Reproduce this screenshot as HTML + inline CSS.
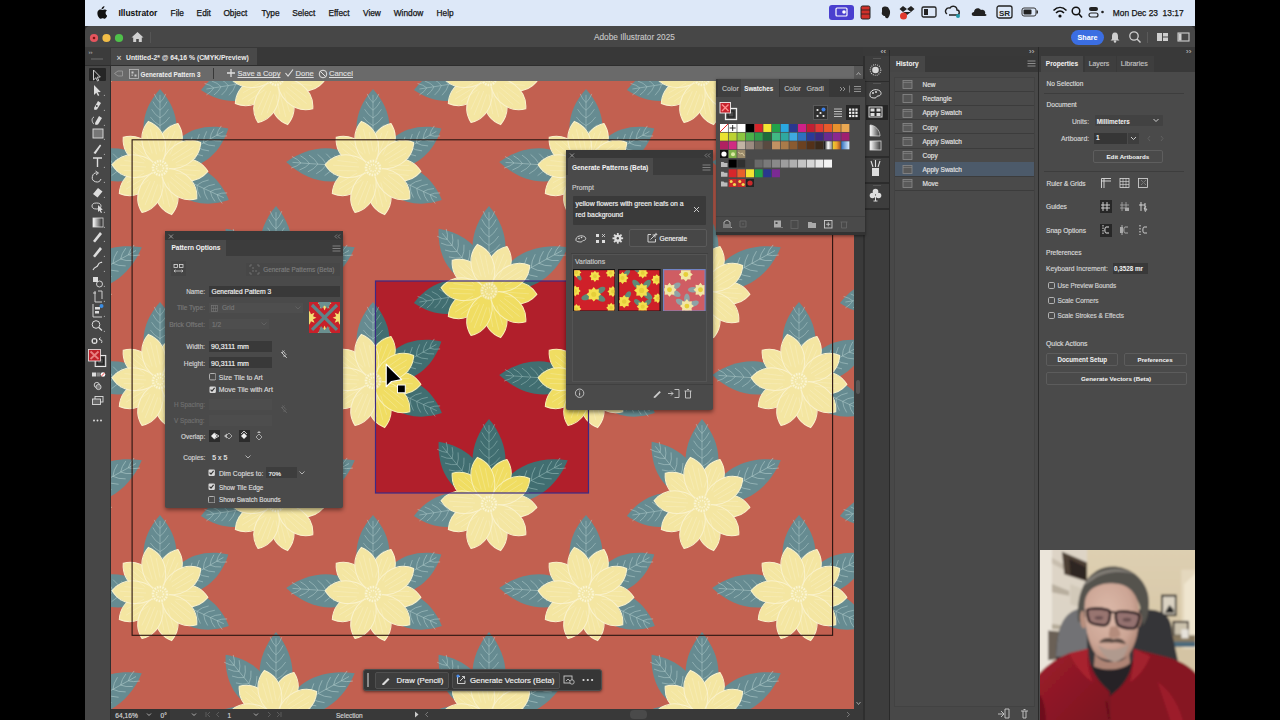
<!DOCTYPE html>
<html><head><meta charset="utf-8"><style>
html,body{margin:0;padding:0;width:1280px;height:720px;overflow:hidden;background:#000}
body{position:relative;font-family:"Liberation Sans",sans-serif}
.t{position:absolute;white-space:pre;line-height:12px;height:12px;-webkit-text-stroke-width:0.18px}
.r{position:absolute}
</style></head><body>
<div class="r" style="left:85px;top:0px;width:1110px;height:26px;background:#dde8f8;"></div><div class="t" style="left:118.4px;top:6.8px;font-size:8.46px;color:#111;font-weight:bold;-webkit-text-stroke-width:0.04px;">Illustrator</div><div class="t" style="left:170.6px;top:6.8px;font-size:8.3px;color:#151515;font-weight:normal;-webkit-text-stroke:0.25px #151515">File</div><div class="t" style="left:196.6px;top:6.8px;font-size:8.3px;color:#151515;font-weight:normal;-webkit-text-stroke:0.25px #151515">Edit</div><div class="t" style="left:223.4px;top:6.8px;font-size:8.3px;color:#151515;font-weight:normal;-webkit-text-stroke:0.25px #151515">Object</div><div class="t" style="left:261.6px;top:6.8px;font-size:8.3px;color:#151515;font-weight:normal;-webkit-text-stroke:0.25px #151515">Type</div><div class="t" style="left:292.2px;top:6.8px;font-size:8.3px;color:#151515;font-weight:normal;-webkit-text-stroke:0.25px #151515">Select</div><div class="t" style="left:328.4px;top:6.8px;font-size:8.3px;color:#151515;font-weight:normal;-webkit-text-stroke:0.25px #151515">Effect</div><div class="t" style="left:363px;top:6.8px;font-size:8.3px;color:#151515;font-weight:normal;-webkit-text-stroke:0.25px #151515">View</div><div class="t" style="left:393.75px;top:6.8px;font-size:8.3px;color:#151515;font-weight:normal;-webkit-text-stroke:0.25px #151515">Window</div><div class="t" style="left:436.6px;top:6.8px;font-size:8.3px;color:#151515;font-weight:normal;-webkit-text-stroke:0.25px #151515">Help</div><div class="t" style="left:1112.8px;top:6.8px;font-size:8.4px;color:#151515;font-weight:normal;-webkit-text-stroke:0.25px #151515">Mon Dec 23&nbsp;&nbsp;13:17</div><svg class="r" style="left:96px;top:6px;" width="11" height="13" viewBox="0 0 11 13"><path d="M7.6,2.2 C8.2,1.5 8.5,0.7 8.4,0 C7.6,0.1 6.8,0.6 6.3,1.2 C5.8,1.8 5.5,2.6 5.6,3.3 C6.4,3.3 7.1,2.9 7.6,2.2Z M9.6,6.9 C9.6,5.4 10.8,4.7 10.9,4.6 C10.2,3.6 9.1,3.5 8.8,3.5 C7.8,3.4 7,4 6.5,4 C6,4 5.3,3.5 4.5,3.5 C3.4,3.5 2.4,4.2 1.9,5.1 C0.8,7 1.6,9.8 2.7,11.3 C3.2,12 3.8,12.9 4.6,12.8 C5.4,12.8 5.7,12.3 6.6,12.3 C7.5,12.3 7.8,12.8 8.6,12.8 C9.4,12.8 9.9,12 10.4,11.3 C11,10.5 11.2,9.7 11.2,9.6 C11.2,9.6 9.6,9 9.6,6.9Z" fill="#111"/></svg><div class="r" style="left:829px;top:5.3px;width:25px;height:14.5px;background:#4a3fcf;border-radius:3px"></div><svg class="r" style="left:829px;top:5.3px;" width="25" height="14.5" viewBox="0 0 25 14.5"><rect x="7" y="3" width="11" height="8" rx="1" fill="none" stroke="#fff" stroke-width="1.2"/><circle cx="15" cy="7" r="1.8" fill="#fff"/></svg><svg class="r" style="left:860px;top:5px;" width="12" height="15" viewBox="0 0 12 15"><rect x="1" y="1" width="9" height="13" rx="1.5" fill="#d0302a" stroke="#222" stroke-width="1"/><path d="M1,5 H10 M1,9 H10" stroke="#222" stroke-width="0.8"/></svg><svg class="r" style="left:880px;top:5px;" width="12" height="15" viewBox="0 0 12 15"><path d="M2,3 C4,1 8,1 9,4 C11,6 10,11 8,13 C6,14 5,12 5,11 C3,11 1,9 2,7Z" fill="#222"/></svg><svg class="r" style="left:899px;top:4px;" width="16" height="16" viewBox="0 0 16 16"><path d="M4,2 L8,5 L4,8 L0.5,5Z M12,2 L15.5,5 L12,8 L8,5Z M4,8 L8,11 L12,8" fill="#222"/><circle cx="4.5" cy="12" r="3.5" fill="#e03a2e"/></svg><svg class="r" style="left:921px;top:5px;" width="16" height="14" viewBox="0 0 16 14"><rect x="1" y="2" width="14" height="10" rx="1.5" fill="none" stroke="#222" stroke-width="1.3"/><rect x="3" y="4" width="4" height="6" fill="#222"/></svg><svg class="r" style="left:944px;top:4px;" width="17" height="16" viewBox="0 0 17 16"><path d="M3,10 C0,8 2,3 6,4 C8,1 13,2 13,6 C16,6 16,11 13,11 L5,11" fill="none" stroke="#222" stroke-width="1.4"/><circle cx="14" cy="12" r="2" fill="#29a"/></svg><svg class="r" style="left:971px;top:5px;" width="16" height="14" viewBox="0 0 16 14"><path d="M3,11 C0,11 0,7 3,7 C3,3 8,2 10,5 C13,4 15,7 14,9 C16,9 16,11 14,11Z" fill="#222"/></svg><svg class="r" style="left:996px;top:4px;" width="17" height="16" viewBox="0 0 17 16"><rect x="1" y="2" width="15" height="12" rx="2" fill="none" stroke="#222" stroke-width="1.3"/><text x="8.5" y="11.5" font-size="8" font-family="Liberation Sans" font-weight="bold" text-anchor="middle" fill="#222">SR</text></svg><svg class="r" style="left:1021px;top:5px;" width="18" height="14" viewBox="0 0 18 14"><rect x="1" y="3" width="14" height="8" rx="2" fill="none" stroke="#333" stroke-width="1"/><rect x="2.5" y="4.5" width="8" height="5" rx="1" fill="#222"/><rect x="15.5" y="5.5" width="1.5" height="3" fill="#333"/></svg><svg class="r" style="left:1052px;top:5px;" width="16" height="14" viewBox="0 0 16 14"><path d="M1.5,5.5 C5.5,1.5 10.5,1.5 14.5,5.5" stroke="#111" stroke-width="1.6" fill="none"/><path d="M4,8 C6.5,5.5 9.5,5.5 12,8" stroke="#111" stroke-width="1.6" fill="none"/><circle cx="8" cy="11" r="1.6" fill="#111"/></svg><svg class="r" style="left:1071px;top:5px;" width="12" height="14" viewBox="0 0 12 14"><circle cx="5" cy="6" r="3.8" fill="none" stroke="#111" stroke-width="1.5"/><path d="M8,9 L11,12.5" stroke="#111" stroke-width="1.6"/></svg><svg class="r" style="left:1088px;top:5px;" width="18" height="14" viewBox="0 0 18 14"><rect x="1" y="2" width="9" height="4" rx="2" fill="#222"/><rect x="1" y="8" width="9" height="4" rx="2" fill="none" stroke="#222" stroke-width="1.2"/><circle cx="14.5" cy="7" r="1.3" fill="#222"/></svg><div class="r" style="left:85px;top:26px;width:1110px;height:694px;background:#2e2e2e;"></div><div class="r" style="left:85px;top:26px;width:1110px;height:21px;background:#474747;border-radius:5px 5px 0 0"></div><div class="r" style="left:85px;top:46.5px;width:1110px;height:1px;background:#333333;"></div><div class="t" style="left:594px;top:32.0px;font-size:8.28px;color:#c9c9c9;font-weight:normal;-webkit-text-stroke:0.1px #c9c9c9">Adobe Illustrator 2025</div><svg class="r" style="left:89px;top:33px;" width="36" height="10" viewBox="0 0 36 10"><circle cx="5" cy="5" r="4.1" fill="#e5555e"/><circle cx="5" cy="5" r="1.3" fill="#7a1414"/><circle cx="17.5" cy="5" r="4.1" fill="#f2bd47"/><circle cx="30" cy="5" r="4.1" fill="#4fc14a"/></svg><svg class="r" style="left:131px;top:31px;" width="13" height="12" viewBox="0 0 13 12"><path d="M6.5,1 L12.5,6.5 L10.8,6.5 L10.8,11 L7.8,11 L7.8,8 L5.2,8 L5.2,11 L2.2,11 L2.2,6.5 L0.5,6.5Z" fill="#d0d0d0"/></svg><div class="r" style="left:150px;top:32px;width:1px;height:11px;background:#555;"></div><div class="r" style="left:1071px;top:29.7px;width:32.5px;height:15px;background:#3b6ee2;border-radius:8px"></div><div class="t" style="left:1077.5px;top:32.0px;font-size:7.2px;color:#fff;font-weight:bold;-webkit-text-stroke-width:0.04px;">Share</div><svg class="r" style="left:1109px;top:31px;" width="12" height="12" viewBox="0 0 12 12"><path d="M6,1.5 C3.5,1.5 3,3.5 3,5.5 L3,8 L1.5,9.5 L10.5,9.5 L9,8 L9,5.5 C9,3.5 8.5,1.5 6,1.5Z" fill="#cfcfcf"/><circle cx="6" cy="10.5" r="1.2" fill="#cfcfcf"/></svg><svg class="r" style="left:1128px;top:30px;" width="14" height="14" viewBox="0 0 14 14"><circle cx="6" cy="6" r="4.2" fill="none" stroke="#cfcfcf" stroke-width="1.3"/><path d="M9,9 L12.5,12.5" stroke="#cfcfcf" stroke-width="1.4"/></svg><div class="r" style="left:1147px;top:32px;width:1px;height:11px;background:#5a5a5a;"></div><svg class="r" style="left:1156px;top:31px;" width="13" height="12" viewBox="0 0 13 12"><rect x="1" y="2" width="5" height="8" fill="#cfcfcf"/><rect x="7" y="2" width="5" height="3.5" fill="#cfcfcf"/><rect x="7" y="6.5" width="5" height="3.5" fill="#cfcfcf"/></svg><svg class="r" style="left:1177px;top:31px;" width="13" height="12" viewBox="0 0 13 12"><rect x="1" y="2" width="11" height="8" fill="none" stroke="#cfcfcf" stroke-width="1.1"/><rect x="1.5" y="2.5" width="3" height="7" fill="#cfcfcf"/></svg><div class="r" style="left:85px;top:47px;width:1110px;height:19px;background:#383838;"></div><div class="r" style="left:85px;top:47px;width:25px;height:19px;background:#3c3c3c;"></div><div class="r" style="left:85px;top:65px;width:1110px;height:1px;background:#2e2e2e;"></div><div class="t" style="left:88.5px;top:46.3px;font-size:6px;color:#9a9a9a;font-weight:normal;">&#8250;&#8250;</div><div class="r" style="left:90.5px;top:58px;width:12px;height:1.5px;background:#555;"></div><div class="r" style="left:111px;top:48px;width:146px;height:17px;background:#494949;"></div><div class="t" style="left:116.5px;top:51.6px;font-size:8.5px;color:#d0d0d0;font-weight:normal;">&#215;</div><div class="t" style="left:126px;top:51.6px;font-size:6.78px;color:#e8e8e8;font-weight:bold;-webkit-text-stroke-width:0.04px;">Untitled-2* @ 64,16 % (CMYK/Preview)</div><div class="r" style="left:85px;top:66px;width:25px;height:654px;background:#474747;"></div><div class="r" style="left:110px;top:66px;width:1px;height:654px;background:#2e2e2e;"></div><div class="r" style="left:89px;top:68px;width:17px;height:13px;background:#262626;border-radius:1px"></div><svg class="r" style="left:85px;top:0px;" width="25" height="430" viewBox="0 0 25 430"><defs><linearGradient id="gr1"><stop offset="0" stop-color="#fff"/><stop offset="1" stop-color="#222"/></linearGradient></defs>
<path d="M9,70 L9,80 L11.3,77.8 L13,81 L14.3,80.3 L12.6,77.2 L15.8,77Z" fill="none" stroke="#ddd" stroke-width="0.9" transform="translate(-0.5,0)"/>
<path d="M9,85 L9,95 L11.3,92.8 L13,96 L14.3,95.3 L12.6,92.2 L15.8,92Z" fill="#ddd"/>
<path d="M9,108 L13,101 L16,103 L12,109.5 L9.5,110Z" fill="#ddd"/><circle cx="11.8" cy="106" r="0.9" fill="#3f3f3f"/>
<path d="M10,123 L14,116 L17,118 L13,124.5 L10.5,125Z" fill="#ddd"/><path d="M9,117 C6,118 7,123 9,124" stroke="#ddd" fill="none" stroke-width="0.9"/>
<rect x="8" y="129" width="10" height="9" fill="#777" stroke="#ddd" stroke-width="0.9"/>
<path d="M8.5,153 L15,144.5 L16.2,145.5 L10.5,154Z" fill="#ddd"/>
<path d="M8,158 H17 M12.5,158 V167" stroke="#ddd" stroke-width="1.4"/>
<path d="M16,179 A4.5,4.5 0 1 1 12.5,173" stroke="#ddd" fill="none" stroke-width="1"/><path d="M10.5,171 L13.5,173 L11,175" stroke="#ddd" fill="none" stroke-width="0.9"/>
<path d="M8,194 L13,188 L17.5,191.5 L12.5,197.5Z" fill="#ddd"/>
<ellipse cx="11.5" cy="206" rx="4.5" ry="3" fill="none" stroke="#ddd" stroke-width="0.9"/><path d="M13,205 L13,212 L14.5,210.5 L16,213 L17,212.5 L15.8,210 L17.8,209.8Z" fill="#ddd"/>
<rect x="8" y="218" width="10" height="9" fill="url(#gr1)" stroke="#ddd" stroke-width="0.8"/>
<path d="M8,241 L15,232 L17,234 L10,242.5Z" fill="#ddd"/>
<path d="M8,256 L15,247 L17,249 L10,257.5Z" fill="#ddd"/>
<path d="M8,270 C10,266 12,268 13,265 C14,262 16,263 17,262" stroke="#ddd" stroke-width="1.1" fill="none"/>
<rect x="8" y="277" width="5" height="5" fill="#ddd"/><circle cx="14.5" cy="284" r="3" fill="none" stroke="#ddd" stroke-width="0.9"/>
<path d="M8,293 H11 M10,291 V302 H17 M13,291 H17 V299" stroke="#ddd" stroke-width="0.9" fill="none"/>
<path d="M8,304 V317 H17" stroke="#ddd" stroke-width="0.9" fill="none"/><rect x="10" y="307" width="5" height="2.5" fill="#ddd"/><rect x="10" y="311" width="4" height="2.5" fill="#ddd"/><circle cx="16.5" cy="306" r="2" fill="#3a8ee6"/>
<circle cx="11" cy="324.5" r="3.8" fill="none" stroke="#ddd" stroke-width="1"/><path d="M13.8,327.5 L17,330.5" stroke="#ddd" stroke-width="1.3"/>
<circle cx="9.5" cy="341" r="3" fill="#ddd"/><rect x="8" y="339.5" width="3" height="3" fill="#444"/><path d="M14,339 C16.5,339 17.5,341 16.5,343 M14,339 L15.5,337.5 M14,339 L15.5,340.5" stroke="#ddd" fill="none" stroke-width="0.9"/>
<rect x="10.2" y="355.5" width="10.5" height="11" fill="none" stroke="#e8e8e8" stroke-width="1.1"/><rect x="12.5" y="358" width="6" height="6" fill="none" stroke="#222" stroke-width="1.2"/>
<rect x="3.5" y="349.5" width="12" height="11.5" fill="#c02028" stroke="#eee" stroke-width="0.8"/><path d="M5.5,351.5 L13.5,359 M13.5,351.5 L5.5,359" stroke="#e88080" stroke-width="1.8"/>
<rect x="7" y="372.5" width="4" height="4" fill="#ddd"/><rect x="11.5" y="372.5" width="4" height="4" fill="#888"/><circle cx="18" cy="374.5" r="2.3" fill="#fff"/><path d="M16.4,376 L19.6,373" stroke="#e22" stroke-width="0.9"/>
<circle cx="11.8" cy="385" r="2.6" fill="none" stroke="#ddd" stroke-width="0.9"/><circle cx="13.5" cy="387" r="2.6" fill="#777" stroke="#ddd" stroke-width="0.8"/>
<rect x="10" y="396.5" width="8" height="5.5" fill="none" stroke="#ddd" stroke-width="0.9"/><rect x="7.5" y="399" width="8" height="5.5" fill="#666" stroke="#ddd" stroke-width="0.9"/>
<circle cx="9" cy="420.5" r="0.95" fill="#ddd"/><circle cx="12.5" cy="420.5" r="0.95" fill="#ddd"/><circle cx="16" cy="420.5" r="0.95" fill="#ddd"/>
<path d="M18.5,96 L20,94.5 L20,96Z" fill="#aaa"/><path d="M18.5,111 L20,109.5 L20,111Z" fill="#aaa"/><path d="M18.5,126 L20,124.5 L20,126Z" fill="#aaa"/><path d="M18.5,140 L20,138.5 L20,140Z" fill="#aaa"/><path d="M18.5,155 L20,153.5 L20,155Z" fill="#aaa"/><path d="M18.5,168 L20,166.5 L20,168Z" fill="#aaa"/><path d="M18.5,183 L20,181.5 L20,183Z" fill="#aaa"/><path d="M18.5,198 L20,196.5 L20,198Z" fill="#aaa"/><path d="M18.5,213 L20,211.5 L20,213Z" fill="#aaa"/><path d="M18.5,228 L20,226.5 L20,228Z" fill="#aaa"/><path d="M18.5,242 L20,240.5 L20,242Z" fill="#aaa"/><path d="M18.5,257 L20,255.5 L20,257Z" fill="#aaa"/><path d="M18.5,272 L20,270.5 L20,272Z" fill="#aaa"/><path d="M18.5,287 L20,285.5 L20,287Z" fill="#aaa"/><path d="M18.5,302 L20,300.5 L20,302Z" fill="#aaa"/><path d="M18.5,317 L20,315.5 L20,317Z" fill="#aaa"/><path d="M18.5,332 L20,330.5 L20,332Z" fill="#aaa"/></svg><div class="r" style="left:111px;top:66px;width:743px;height:15px;background:#6a6a6a;"></div><div class="r" style="left:854px;top:66px;width:10px;height:15px;background:#575757;"></div><svg class="r" style="left:854px;top:66px;" width="9" height="15" viewBox="0 0 9 15"><path d="M2.5,9 L4.5,6.5 L6.5,9" stroke="#aaa" fill="none" stroke-width="0.9"/></svg><svg class="r" style="left:113px;top:68px;" width="11" height="11" viewBox="0 0 11 11"><path d="M9.5,3 L5,3 L1.5,5.5 L5,8 L9.5,8Z" fill="none" stroke="#999" stroke-width="0.9"/></svg><svg class="r" style="left:129px;top:69px;" width="10" height="10" viewBox="0 0 10 10"><rect x="0.5" y="0.5" width="9" height="9" fill="none" stroke="#bbb" stroke-width="0.8"/><rect x="2.5" y="2.5" width="2" height="2" fill="#ccc"/><rect x="5.5" y="5.5" width="2" height="2" fill="#ccc"/><rect x="2.5" y="5.5" width="1.5" height="1.5" fill="#aaa"/></svg><div class="t" style="left:140.6px;top:68.6px;font-size:6.31px;color:#eeeeee;font-weight:bold;-webkit-text-stroke-width:0.04px;">Generated Pattern 3</div><div class="r" style="left:213px;top:68px;width:1px;height:11px;background:#383838;"></div><svg class="r" style="left:226px;top:68px;" width="10" height="10" viewBox="0 0 10 10"><path d="M5,1 V9 M1,5 H9" stroke="#e0e0e0" stroke-width="1.3"/></svg><div class="t" style="left:237.5px;top:68.4px;font-size:7.5px;color:#dedede;font-weight:normal;text-decoration:underline">Save a Copy</div><svg class="r" style="left:284px;top:68px;" width="10" height="10" viewBox="0 0 10 10"><path d="M1.5,5 L4,8 L9,1.5" stroke="#e0e0e0" stroke-width="1.1" fill="none"/></svg><div class="t" style="left:295.6px;top:68.4px;font-size:7.6px;color:#dedede;font-weight:normal;text-decoration:underline">Done</div><svg class="r" style="left:318px;top:68.5px;" width="10" height="10" viewBox="0 0 10 10"><circle cx="5" cy="5" r="3.8" fill="none" stroke="#e0e0e0" stroke-width="1"/><path d="M2.3,2.3 L7.7,7.7" stroke="#e0e0e0" stroke-width="1"/></svg><div class="t" style="left:329px;top:68.4px;font-size:7.7px;color:#dedede;font-weight:normal;text-decoration:underline">Cancel</div><svg style="position:absolute;left:111px;top:81px" width="743" height="628.5" viewBox="111 81 743 628.5">
<defs>
<g id="leaf">
  <path d="M0,-8 C23,-27 21,-58 0,-82 C-21,-58 -23,-27 0,-8Z" style="fill:var(--leaf)"/>
  <path d="M0,-6 L0,-76 M0,-12 Q4.3,-15 7.1,-21 M0,-12 Q-4.3,-15 -7.1,-21 M0,-20 Q5.0,-23 8.4,-29 M0,-20 Q-5.0,-23 -8.4,-29 M0,-28 Q5.8,-31 9.7,-37 M0,-28 Q-5.8,-31 -9.7,-37 M0,-36 Q6.6,-39 11.0,-45 M0,-36 Q-6.6,-39 -11.0,-45 M0,-44 Q5.8,-47 9.7,-53 M0,-44 Q-5.8,-47 -9.7,-53 M0,-52 Q5.0,-55 8.4,-61 M0,-52 Q-5.0,-55 -8.4,-61 M0,-60 Q4.3,-63 7.1,-69 M0,-60 Q-4.3,-63 -7.1,-69 M0,-68 Q3.5,-71 5.8,-77 M0,-68 Q-3.5,-71 -5.8,-77" style="stroke:var(--vein)" stroke-width="0.7" fill="none" opacity="0.8"/>
</g>
<path id="petal" d="M0,-4 C13,-9 17,-36 0,-48 C-17,-36 -13,-9 0,-4Z" style="fill:var(--petal);stroke:var(--pedge)" stroke-width="1"/>
<path id="pv" d="M0,-14 L0,-40 M-4,-16 L-5,-36 M4,-16 L5,-36" style="stroke:var(--pedge)" stroke-width="0.6" fill="none" opacity="0.6"/>
<g id="head">
  <circle r="21" style="fill:var(--petal2)"/>
  <use href="#petal" transform="rotate(22)"/><use href="#petal" transform="rotate(94)"/><use href="#petal" transform="rotate(166)"/><use href="#petal" transform="rotate(238)"/><use href="#petal" transform="rotate(310)"/><use href="#petal" transform="rotate(58)"/><use href="#petal" transform="rotate(130)"/><use href="#petal" transform="rotate(202)"/><use href="#petal" transform="rotate(274)"/><use href="#petal" transform="rotate(346)"/>
  <use href="#pv" transform="rotate(22)"/><use href="#pv" transform="rotate(58)"/><use href="#pv" transform="rotate(94)"/><use href="#pv" transform="rotate(130)"/><use href="#pv" transform="rotate(166)"/><use href="#pv" transform="rotate(202)"/><use href="#pv" transform="rotate(238)"/><use href="#pv" transform="rotate(274)"/><use href="#pv" transform="rotate(310)"/><use href="#pv" transform="rotate(346)"/>
  <circle r="9" style="fill:var(--ctr)"/>
  <circle r="7" fill="none" style="stroke:var(--dots)" stroke-width="2.4" stroke-dasharray="1.5 1.2"/>
  <circle r="3.5" fill="none" style="stroke:var(--dots)" stroke-width="1.6" stroke-dasharray="1.2 1.1"/>
</g><g id="fa"><use href="#leaf" transform="rotate(0) scale(1,0.963)"/><use href="#leaf" transform="rotate(-86) scale(1,1.061)"/><use href="#leaf" transform="rotate(60) scale(1,0.963)"/><use href="#leaf" transform="rotate(115) scale(1,0.927)"/><use href="#head"/></g><g id="fb"><use href="#leaf" transform="rotate(0) scale(1,1.037)"/><use href="#leaf" transform="rotate(-39) scale(1,0.976)"/><use href="#leaf" transform="rotate(61) scale(1,1.098)"/><use href="#leaf" transform="rotate(-99) scale(1,0.927)"/><use href="#head"/></g>
<clipPath id="tileclip"><rect x="375.5" y="281" width="213" height="212"/></clipPath></defs>
<rect x="111" y="81" width="743" height="628.5" fill="#c26050"/>
<g style="--leaf:#668b91;--vein:#aac6c6;--petal:#f4e6a2;--pedge:#faf2cc;--petal2:#f1e19a;--ctr:#f3e7a8;--dots:#fbf5d2"><use href="#fa" x="160" y="168"/><use href="#fa" x="373" y="168"/><use href="#fa" x="586" y="168"/><use href="#fa" x="799" y="168"/><use href="#fa" x="160" y="381"/><use href="#fa" x="373" y="381"/><use href="#fa" x="586" y="381"/><use href="#fa" x="799" y="381"/><use href="#fa" x="160" y="594"/><use href="#fa" x="373" y="594"/><use href="#fa" x="586" y="594"/><use href="#fa" x="799" y="594"/><use href="#fb" x="63" y="78"/><use href="#fb" x="276" y="78"/><use href="#fb" x="489" y="78"/><use href="#fb" x="702" y="78"/><use href="#fb" x="915" y="78"/><use href="#fb" x="63" y="291"/><use href="#fb" x="276" y="291"/><use href="#fb" x="489" y="291"/><use href="#fb" x="702" y="291"/><use href="#fb" x="915" y="291"/><use href="#fb" x="63" y="504"/><use href="#fb" x="276" y="504"/><use href="#fb" x="489" y="504"/><use href="#fb" x="702" y="504"/><use href="#fb" x="915" y="504"/><use href="#fb" x="63" y="717"/><use href="#fb" x="276" y="717"/><use href="#fb" x="489" y="717"/><use href="#fb" x="702" y="717"/><use href="#fb" x="915" y="717"/></g>
<g clip-path="url(#tileclip)" style="--leaf:#416e71;--vein:#8fb3b2;--petal:#f0dd62;--pedge:#f8f0b4;--petal2:#ecd85c;--ctr:#efe08a;--dots:#f8f0c0">
<rect x="375.5" y="281" width="213" height="212" fill="#b11f2b"/>
<use href="#fa" x="373" y="381"/><use href="#fa" x="586" y="381"/><use href="#fb" x="489" y="291"/><use href="#fb" x="489" y="504"/>
</g>
<rect x="375.5" y="281" width="213" height="212" fill="none" stroke="#3b2a86" stroke-width="1.2"/>
<rect x="132.1" y="139.8" width="700.5" height="495.5" fill="none" stroke="#2a1410" stroke-width="1.1"/>
</svg><div class="r" style="left:854px;top:81px;width:9px;height:628px;background:#3a3a3a;"></div><div class="r" style="left:856px;top:380px;width:4px;height:14px;background:#555;border-radius:2px"></div><svg class="r" style="left:854px;top:699px;" width="9" height="10" viewBox="0 0 9 10"><path d="M2.5,3 L4.5,5.5 L6.5,3" stroke="#aaa" fill="none" stroke-width="0.9"/></svg><div class="r" style="left:111px;top:709px;width:752px;height:11px;background:#393939;"></div><div class="r" style="left:111px;top:709px;width:59px;height:11px;background:#323232;"></div><div class="t" style="left:115.3px;top:710.1px;font-size:6.63px;color:#d0d0d0;font-weight:normal;">64,16%</div><div class="t" style="left:160.6px;top:710.1px;font-size:6.5px;color:#d0d0d0;font-weight:normal;">0°</div><div class="t" style="left:227.5px;top:710.1px;font-size:6.5px;color:#d0d0d0;font-weight:normal;">1</div><div class="t" style="left:336px;top:710.1px;font-size:6.51px;color:#d0d0d0;font-weight:normal;">Selection</div><svg class="r" style="left:145px;top:712px;" width="120" height="6" viewBox="0 0 120 6"><path d="M2,1.5 L4,3.5 L6,1.5" stroke="#bbb" fill="none" stroke-width="0.9" transform="translate(0,0)"/><path d="M47,1.5 L49,3.5 L51,1.5" stroke="#bbb" fill="none" stroke-width="0.9"/><path d="M109,1.5 L111,3.5 L113,1.5" stroke="#bbb" fill="none" stroke-width="0.9"/></svg><svg class="r" style="left:204px;top:711px;" width="80" height="7" viewBox="0 0 80 7"><path d="M2,1 V6 M6,1 L3.5,3.5 L6,6 M15,1 L12.5,3.5 L15,6" stroke="#666" fill="none" stroke-width="0.8"/><path d="M64,1 L66.5,3.5 L64,6 M73,1 L75.5,3.5 L73,6 M77,1 V6" stroke="#666" fill="none" stroke-width="0.8"/></svg><svg class="r" style="left:414px;top:711px;" width="16" height="7" viewBox="0 0 16 7"><path d="M1,0.5 L4.5,3.5 L1,6.5Z" fill="#ccc"/><path d="M14,1 L11.5,3.5 L14,6" stroke="#888" fill="none" stroke-width="0.8"/></svg><div class="r" style="left:630px;top:710px;width:17px;height:9px;background:#4a4a4a;border-radius:4px"></div><svg class="r" style="left:845px;top:711px;" width="8" height="7" viewBox="0 0 8 7"><path d="M2,1 L4.5,3.5 L2,6" stroke="#888" fill="none" stroke-width="0.8"/></svg><div class="r" style="left:863px;top:47px;width:27px;height:673px;background:#393939;"></div><div class="r" style="left:863px;top:56px;width:2px;height:664px;background:#2f2f2f;"></div><div class="r" style="left:889px;top:56px;width:2px;height:664px;background:#2f2f2f;"></div><div class="r" style="left:865px;top:56px;width:24px;height:664px;background:#3d3d3d;"></div><div class="t" style="left:880.5px;top:46.0px;font-size:8px;color:#bbb;font-weight:normal;">&#8249;&#8249;</div><svg class="r" style="left:863px;top:0px;" width="27" height="210" viewBox="0 0 27 210"><defs><linearGradient id="gr2"><stop offset="0" stop-color="#fff"/><stop offset="1" stop-color="#333"/></linearGradient></defs>
<circle cx="12.5" cy="70" r="3.3" fill="#d8d8d8"/><circle cx="12.5" cy="70" r="5.3" fill="none" stroke="#d0d0d0" stroke-width="1.1" stroke-dasharray="0.9 1.1"/>
<path d="M7,96 C6,90 13,88 17,91 C19,93 18,96 15,96 C13,96 14,98 12,98 C9,98 7.5,97.5 7,96Z" fill="none" stroke="#ddd" stroke-width="1"/><circle cx="10" cy="93" r="1" fill="#ddd"/><circle cx="13" cy="92" r="1" fill="#ddd"/>
<rect x="6" y="107" width="13" height="10" fill="none" stroke="#ddd" stroke-width="1"/><path d="M6,112 H19 M12.5,107 V117" stroke="#ddd" stroke-width="0.8"/>
<path d="M7,136 V125 C12,125 17,130 17,136Z" fill="url(#gr2)" stroke="#ddd" stroke-width="0.7"/>
<rect x="7" y="141" width="11" height="9" fill="url(#gr2)" stroke="#ddd" stroke-width="0.8"/>
<path d="M9,168 L9,176 L16,176 L16,168" fill="#ddd"/><path d="M10,167 L8,161 M12.5,167 V160 M15,167 L17,161" stroke="#ddd" stroke-width="1.1"/>
<circle cx="12.5" cy="191.5" r="2.8" fill="#ddd"/><circle cx="9.5" cy="195.5" r="2.8" fill="#ddd"/><circle cx="15.5" cy="195.5" r="2.8" fill="#ddd"/><path d="M12.5,196 V201 M10.5,201 H14.5" stroke="#ddd" stroke-width="1"/>
</svg><div class="r" style="left:866px;top:104.5px;width:22px;height:15px;background:#262626;"></div><svg class="r" style="left:863px;top:0px;" width="27" height="210" viewBox="0 0 27 210"><rect x="6" y="107" width="13" height="10" fill="none" stroke="#ddd" stroke-width="1"/><rect x="7.5" y="108.5" width="4" height="3" fill="#ddd"/><rect x="13.5" y="108.5" width="4" height="3" fill="#ddd"/><rect x="7.5" y="113" width="4" height="3" fill="#ddd"/><rect x="13.5" y="113" width="4" height="3" fill="#ddd"/></svg><div class="r" style="left:865px;top:80.5px;width:24px;height:1.5px;background:#2c2c2c;"></div><div class="r" style="left:865px;top:156px;width:24px;height:1.5px;background:#2c2c2c;"></div><div class="r" style="left:865px;top:182px;width:24px;height:1.5px;background:#2c2c2c;"></div><div class="r" style="left:865px;top:208px;width:24px;height:1.5px;background:#2c2c2c;"></div><div class="r" style="left:873px;top:58px;width:8px;height:1px;background:#555;"></div><div class="r" style="left:873px;top:83px;width:8px;height:1px;background:#555;"></div><div class="r" style="left:873px;top:158.5px;width:8px;height:1px;background:#555;"></div><div class="r" style="left:873px;top:184.5px;width:8px;height:1px;background:#555;"></div><div class="r" style="left:889px;top:50px;width:1px;height:670px;background:#2a2a2a;"></div><div class="r" style="left:890px;top:47px;width:148px;height:673px;background:#484848;"></div><div class="r" style="left:890px;top:47px;width:148px;height:9px;background:#393939;"></div><div class="t" style="left:1029px;top:46.0px;font-size:8px;color:#aaa;font-weight:normal;">&#8250;&#8250;</div><div class="r" style="left:890px;top:56px;width:148px;height:16px;background:#383838;"></div><div class="r" style="left:890px;top:56px;width:35px;height:16px;background:#464646;"></div><div class="t" style="left:896px;top:58.1px;font-size:6.6px;color:#f2f2f2;font-weight:bold;-webkit-text-stroke-width:0.04px;">History</div><svg class="r" style="left:1026px;top:59px;" width="11" height="9" viewBox="0 0 11 9"><path d="M1.5,2 H9.5 M1.5,4.5 H9.5 M1.5,7 H9.5" stroke="#999" stroke-width="0.9"/></svg><div class="r" style="left:894px;top:77px;width:141px;height:630px;background:#4a4a4a;border:1px solid #424242;box-sizing:border-box"></div><div class="r" style="left:895px;top:91.0px;width:139px;height:0.8px;background:#3c3c3c;"></div><svg class="r" style="left:902px;top:79.2px;" width="11" height="10" viewBox="0 0 11 10"><rect x="1" y="1.5" width="9" height="8" fill="#5a5a5a" stroke="#8a8a8a" stroke-width="0.8"/><path d="M1,3.5 H10" stroke="#8a8a8a" stroke-width="0.6"/></svg><div class="t" style="left:922.5px;top:79.0px;font-size:6.5px;color:#e0e0e0;font-weight:normal;">New</div><div class="r" style="left:895px;top:105.15px;width:139px;height:0.8px;background:#3c3c3c;"></div><svg class="r" style="left:902px;top:93.35000000000001px;" width="11" height="10" viewBox="0 0 11 10"><rect x="1" y="1.5" width="9" height="8" fill="#555" stroke="#8a8a8a" stroke-width="0.8"/></svg><div class="t" style="left:922.5px;top:93.2px;font-size:6.5px;color:#e0e0e0;font-weight:normal;">Rectangle</div><div class="r" style="left:895px;top:119.3px;width:139px;height:0.8px;background:#3c3c3c;"></div><svg class="r" style="left:902px;top:107.5px;" width="11" height="10" viewBox="0 0 11 10"><rect x="1" y="1.5" width="9" height="8" fill="#5a5a5a" stroke="#8a8a8a" stroke-width="0.8"/><path d="M1,3.5 H10" stroke="#8a8a8a" stroke-width="0.6"/></svg><div class="t" style="left:922.5px;top:107.3px;font-size:6.5px;color:#e0e0e0;font-weight:normal;">Apply Swatch</div><div class="r" style="left:895px;top:133.45000000000002px;width:139px;height:0.8px;background:#3c3c3c;"></div><svg class="r" style="left:902px;top:121.65px;" width="11" height="10" viewBox="0 0 11 10"><rect x="1" y="1.5" width="9" height="8" fill="#5a5a5a" stroke="#8a8a8a" stroke-width="0.8"/><path d="M1,3.5 H10" stroke="#8a8a8a" stroke-width="0.6"/></svg><div class="t" style="left:922.5px;top:121.5px;font-size:6.5px;color:#e0e0e0;font-weight:normal;">Copy</div><div class="r" style="left:895px;top:147.60000000000002px;width:139px;height:0.8px;background:#3c3c3c;"></div><svg class="r" style="left:902px;top:135.8px;" width="11" height="10" viewBox="0 0 11 10"><rect x="1" y="1.5" width="9" height="8" fill="#5a5a5a" stroke="#8a8a8a" stroke-width="0.8"/><path d="M1,3.5 H10" stroke="#8a8a8a" stroke-width="0.6"/></svg><div class="t" style="left:922.5px;top:135.6px;font-size:6.5px;color:#e0e0e0;font-weight:normal;">Apply Swatch</div><div class="r" style="left:895px;top:161.75px;width:139px;height:0.8px;background:#3c3c3c;"></div><svg class="r" style="left:902px;top:149.95px;" width="11" height="10" viewBox="0 0 11 10"><rect x="1" y="1.5" width="9" height="8" fill="#5a5a5a" stroke="#8a8a8a" stroke-width="0.8"/><path d="M1,3.5 H10" stroke="#8a8a8a" stroke-width="0.6"/></svg><div class="t" style="left:922.5px;top:149.8px;font-size:6.5px;color:#e0e0e0;font-weight:normal;">Copy</div><div class="r" style="left:895px;top:162.3px;width:139px;height:13.6px;background:#4c5a6a;"></div><div class="r" style="left:895px;top:175.90000000000003px;width:139px;height:0.8px;background:#3c3c3c;"></div><svg class="r" style="left:902px;top:164.10000000000002px;" width="11" height="10" viewBox="0 0 11 10"><rect x="1" y="1.5" width="9" height="8" fill="#5a5a5a" stroke="#8a8a8a" stroke-width="0.8"/><path d="M1,3.5 H10" stroke="#8a8a8a" stroke-width="0.6"/></svg><div class="t" style="left:922.5px;top:163.9px;font-size:6.5px;color:#e0e0e0;font-weight:normal;">Apply Swatch</div><div class="r" style="left:895px;top:190.05px;width:139px;height:0.8px;background:#3c3c3c;"></div><svg class="r" style="left:902px;top:178.25px;" width="11" height="10" viewBox="0 0 11 10"><rect x="1" y="1.5" width="9" height="8" fill="#5a5a5a" stroke="#8a8a8a" stroke-width="0.8"/><path d="M1,3.5 H10" stroke="#8a8a8a" stroke-width="0.6"/></svg><div class="t" style="left:922.5px;top:178.1px;font-size:6.5px;color:#e0e0e0;font-weight:normal;">Move</div><svg class="r" style="left:995px;top:707px;" width="35" height="12" viewBox="0 0 35 12"><path d="M3,7 H9 M6,4 L9,7 L6,10 M10,2 V11 H14 V2Z" stroke="#ccc" stroke-width="0.9" fill="none"/><path d="M26,4 H33 M28,4 V11 H31 V4 M28.5,2.5 H30.5" stroke="#ccc" stroke-width="0.9" fill="none"/></svg><div class="r" style="left:1038px;top:47px;width:1px;height:673px;background:#2a2a2a;"></div><div class="r" style="left:1039px;top:47px;width:156px;height:673px;background:#4a4a4a;"></div><div class="r" style="left:1039px;top:47px;width:156px;height:9px;background:#393939;"></div><div class="t" style="left:1186px;top:46.0px;font-size:8px;color:#aaa;font-weight:normal;">&#8250;&#8250;</div><div class="r" style="left:1039px;top:56px;width:156px;height:16px;background:#393939;"></div><div class="r" style="left:1041px;top:56px;width:42px;height:16px;background:#484848;"></div><div class="r" style="left:1084.5px;top:56px;width:31px;height:16px;background:#3e3e3e;"></div><div class="r" style="left:1116.5px;top:56px;width:37px;height:16px;background:#3e3e3e;"></div><div class="t" style="left:1045.8px;top:58.3px;font-size:6.53px;color:#f2f2f2;font-weight:bold;-webkit-text-stroke-width:0.04px;">Properties</div><div class="t" style="left:1088.7px;top:58.3px;font-size:6.86px;color:#c0c0c0;font-weight:normal;">Layers</div><div class="t" style="left:1120.8px;top:58.3px;font-size:7.0px;color:#c0c0c0;font-weight:normal;">Libraries</div><div class="t" style="left:1046.5px;top:77.5px;font-size:6.5px;color:#d8d8d8;font-weight:normal;">No Selection</div><div class="r" style="left:1044px;top:92.5px;width:140px;height:0.8px;background:#3d3d3d;"></div><div class="t" style="left:1046.5px;top:98.8px;font-size:6.63px;color:#d8d8d8;font-weight:normal;">Document</div><div class="t" style="left:1072px;top:115.6px;font-size:6.65px;color:#d0d0d0;font-weight:normal;">Units:</div><div class="r" style="left:1094.5px;top:115px;width:68px;height:11px;background:#424242;border-radius:1px"></div><div class="t" style="left:1096.7px;top:115.6px;font-size:6.34px;color:#f0f0f0;font-weight:bold;-webkit-text-stroke-width:0.04px;">Millimeters</div><svg class="r" style="left:1152px;top:117px;" width="8" height="7" viewBox="0 0 8 7"><path d="M1.5,2 L4,4.5 L6.5,2" stroke="#ddd" stroke-width="0.9" fill="none"/></svg><div class="t" style="left:1061px;top:133.3px;font-size:6.83px;color:#d0d0d0;font-weight:normal;">Artboard:</div><div class="r" style="left:1094px;top:133px;width:33px;height:11px;background:#363636;"></div><div class="r" style="left:1127.5px;top:133px;width:11px;height:11px;background:#3e3e3e;"></div><div class="t" style="left:1096px;top:132.3px;font-size:6.5px;color:#f0f0f0;font-weight:bold;-webkit-text-stroke-width:0.04px;">1</div><svg class="r" style="left:1128.5px;top:135px;" width="9" height="7" viewBox="0 0 9 7"><path d="M2,2 L4.5,4.5 L7,2" stroke="#ddd" stroke-width="0.9" fill="none"/></svg><svg class="r" style="left:1145px;top:134px;" width="20" height="9" viewBox="0 0 20 9"><path d="M5,2 L3,4.5 L5,7 M16,2 L18,4.5 L16,7" stroke="#666" stroke-width="0.8" fill="none"/></svg><div class="r" style="left:1092.7px;top:150px;width:70.8px;height:12.5px;background:#4a4a4a;border:1px solid #5e5e5e;box-sizing:border-box;border-radius:2px"></div><div class="t" style="left:1106.5px;top:151.1px;font-size:6.18px;color:#f0f0f0;font-weight:bold;-webkit-text-stroke-width:0.04px;">Edit Artboards</div><div class="r" style="left:1044px;top:170.5px;width:140px;height:0.8px;background:#3d3d3d;"></div><div class="t" style="left:1046.5px;top:178.1px;font-size:6.53px;color:#d8d8d8;font-weight:normal;">Ruler &amp; Grids</div><svg class="r" style="left:1100px;top:177px;" width="50" height="12" viewBox="0 0 50 12"><path d="M1.5,11 V1.5 H11 M1.5,4 H11 M4,1.5 V11" stroke="#ddd" stroke-width="0.9" fill="none"/><rect x="20" y="1.5" width="9" height="9" fill="none" stroke="#ddd" stroke-width="0.8"/><path d="M23,1.5 V10.5 M26,1.5 V10.5 M20,4.5 H29 M20,7.5 H29" stroke="#ddd" stroke-width="0.6"/><rect x="38.5" y="1.5" width="9" height="9" fill="none" stroke="#ddd" stroke-width="0.8"/><path d="M41,3 L46,8 M46,3 L41,8" stroke="#ddd" stroke-width="0.5" stroke-dasharray="1 1"/></svg><div class="t" style="left:1046px;top:201.4px;font-size:6.6px;color:#d8d8d8;font-weight:normal;">Guides</div><div class="r" style="left:1099.5px;top:200px;width:12.5px;height:13px;background:#272727;"></div><svg class="r" style="left:1099px;top:200px;" width="52" height="13" viewBox="0 0 52 13"><path d="M4,2 V11 M8,2 V11 M2,5 H11 M2,8 H11" stroke="#ddd" stroke-width="0.9"/><path d="M23,2 V11 M27,2 V11 M21,5 H30 M21,8 H30" stroke="#aaa" stroke-width="0.8"/><rect x="26" y="8" width="4" height="3" fill="#aaa"/><path d="M42,2 V11 M40,5 H46 M46,3 V11" stroke="#ddd" stroke-width="0.9"/><path d="M47,6 L45,9 L48,9 L46,12" stroke="#ddd" stroke-width="0.7" fill="none"/></svg><div class="r" style="left:1099.5px;top:223.5px;width:12.5px;height:13px;background:#272727;"></div><div class="t" style="left:1046px;top:224.8px;font-size:6.6px;color:#d8d8d8;font-weight:normal;">Snap Options</div><svg class="r" style="left:1099px;top:223px;" width="52" height="14" viewBox="0 0 52 14"><path d="M4,2 V12" stroke="#ddd" stroke-width="1" stroke-dasharray="1.5 1"/><path d="M10,4 H7 C5.5,4 5.5,10 7,10 H10" stroke="#ddd" stroke-width="1" fill="none"/><path d="M23,2 V12" stroke="#aaa" stroke-width="1"/><rect x="21" y="4" width="3" height="6" fill="#aaa"/><path d="M29,4 H26 C24.5,4 24.5,10 26,10 H29" stroke="#aaa" stroke-width="1" fill="none"/><path d="M41,2 V12" stroke="#ccc" stroke-width="1.2" stroke-dasharray="1.5 1.5"/><path d="M48,4 H45 C43.5,4 43.5,10 45,10 H48" stroke="#ccc" stroke-width="1" fill="none"/></svg><div class="t" style="left:1046px;top:246.8px;font-size:6.6px;color:#d8d8d8;font-weight:normal;">Preferences</div><div class="t" style="left:1046px;top:262.8px;font-size:6.67px;color:#d0d0d0;font-weight:normal;">Keyboard Increment:</div><div class="r" style="left:1112.5px;top:262.5px;width:35px;height:11px;background:#393939;"></div><div class="t" style="left:1114px;top:262.6px;font-size:6.3px;color:#f0f0f0;font-weight:bold;-webkit-text-stroke-width:0.04px;">0,3528 mr</div><svg class="r" style="left:1047.5px;top:282.1px;" width="7" height="7" viewBox="0 0 7 7"><rect x="0.5" y="0.5" width="6" height="6" rx="1.2" fill="none" stroke="#bdbdbd" stroke-width="0.9"/></svg><div class="t" style="left:1057.4px;top:280.4px;font-size:6.35px;color:#d0d0d0;font-weight:normal;">Use Preview Bounds</div><svg class="r" style="left:1047.5px;top:297.0px;" width="7" height="7" viewBox="0 0 7 7"><rect x="0.5" y="0.5" width="6" height="6" rx="1.2" fill="none" stroke="#bdbdbd" stroke-width="0.9"/></svg><div class="t" style="left:1057.4px;top:295.3px;font-size:6.5px;color:#d0d0d0;font-weight:normal;">Scale Corners</div><svg class="r" style="left:1047.5px;top:311.9px;" width="7" height="7" viewBox="0 0 7 7"><rect x="0.5" y="0.5" width="6" height="6" rx="1.2" fill="none" stroke="#bdbdbd" stroke-width="0.9"/></svg><div class="t" style="left:1057.4px;top:310.2px;font-size:6.4px;color:#d0d0d0;font-weight:normal;">Scale Strokes &amp; Effects</div><div class="t" style="left:1046px;top:337.8px;font-size:6.85px;color:#d8d8d8;font-weight:normal;">Quick Actions</div><div class="r" style="left:1046px;top:353px;width:72.4px;height:13.4px;background:#4a4a4a;border:1px solid #5c5c5c;box-sizing:border-box;border-radius:2px"></div><div class="t" style="left:1057.4px;top:354.4px;font-size:6.28px;color:#f0f0f0;font-weight:bold;-webkit-text-stroke-width:0.04px;">Document Setup</div><div class="r" style="left:1124px;top:353px;width:62.6px;height:13.4px;background:#4a4a4a;border:1px solid #5c5c5c;box-sizing:border-box;border-radius:2px"></div><div class="t" style="left:1137.6px;top:354.4px;font-size:6.11px;color:#f0f0f0;font-weight:bold;-webkit-text-stroke-width:0.04px;">Preferences</div><div class="r" style="left:1046px;top:372px;width:140.6px;height:13.4px;background:#4a4a4a;border:1px solid #5c5c5c;box-sizing:border-box;border-radius:2px"></div><div class="t" style="left:1081px;top:373.4px;font-size:6.2px;color:#f0f0f0;font-weight:bold;-webkit-text-stroke-width:0.04px;">Generate Vectors (Beta)</div><div class="r" style="left:716px;top:79px;width:149px;height:156px;background:#333333;box-shadow:0 1px 3px rgba(0,0,0,.5)"></div><div class="r" style="left:716px;top:79px;width:149px;height:153px;background:#4a4a4a;"></div><div class="r" style="left:716px;top:79px;width:149px;height:18px;background:#383838;"></div><div class="r" style="left:717.5px;top:79px;width:23px;height:18px;background:#3f3f3f;"></div><div class="r" style="left:740.9px;top:79px;width:37.8px;height:18.5px;background:#4a4a4a;"></div><div class="r" style="left:779.8px;top:79px;width:49px;height:18px;background:#3f3f3f;"></div><div class="t" style="left:722px;top:83.3px;font-size:7.0px;color:#bdbdbd;font-weight:normal;">Color</div><div class="t" style="left:744.2px;top:83.3px;font-size:6.29px;color:#f2f2f2;font-weight:bold;-webkit-text-stroke-width:0.04px;">Swatches</div><div class="t" style="left:784.2px;top:83.3px;font-size:7.0px;color:#bdbdbd;font-weight:normal;">Color</div><div class="t" style="left:806.4px;top:83.3px;font-size:7.2px;color:#bdbdbd;font-weight:normal;">Gradi</div><svg class="r" style="left:838px;top:84px;" width="25" height="10" viewBox="0 0 25 10"><path d="M2,3 L4,5 L2,7 M5,3 L7,5 L5,7" stroke="#aaa" stroke-width="0.8" fill="none"/><path d="M11.5,1.5 V8.5" stroke="#888" stroke-width="0.8"/><path d="M16,2.5 H23 M16,5 H23 M16,7.5 H23" stroke="#aaa" stroke-width="0.8"/></svg><svg class="r" style="left:719px;top:101px;" width="20" height="20" viewBox="0 0 20 20"><rect x="6.5" y="7.5" width="11" height="11" fill="none" stroke="#eee" stroke-width="1.3"/><rect x="9" y="10" width="6" height="6" fill="none" stroke="#222" stroke-width="1.2"/><rect x="1" y="1.5" width="10.5" height="10.5" fill="#c5222c" stroke="#eee" stroke-width="0.9"/><path d="M3,3.5 L9.5,10 M9.5,3.5 L3,10" stroke="#ff8f8f" stroke-width="1.4"/></svg><div class="r" style="left:813px;top:105px;width:14.5px;height:14.5px;background:#303030;border:1px solid #5a5a5a;box-sizing:border-box"></div><svg class="r" style="left:813px;top:105px;" width="15" height="15" viewBox="0 0 15 15"><circle cx="4.5" cy="5" r="1.1" fill="#eee"/><circle cx="7.5" cy="8" r="1.1" fill="#eee"/><circle cx="4.5" cy="11" r="1.1" fill="#eee"/><circle cx="10.5" cy="11" r="1.1" fill="#eee"/><circle cx="10.5" cy="4.5" r="2" fill="#3a7ee8"/></svg><svg class="r" style="left:832px;top:106px;" width="12" height="13" viewBox="0 0 12 13"><path d="M2,3 H10 M2,5.5 H10 M2,8 H10 M2,10.5 H10" stroke="#ccc" stroke-width="0.9"/></svg><div class="r" style="left:846.4px;top:105px;width:14px;height:14.5px;background:#262626;"></div><svg class="r" style="left:846.4px;top:105px;" width="14" height="15" viewBox="0 0 14 15"><rect x="3.0" y="3.5" width="2.2" height="2.2" fill="#f0f0f0"/><rect x="3.0" y="6.7" width="2.2" height="2.2" fill="#f0f0f0"/><rect x="3.0" y="9.9" width="2.2" height="2.2" fill="#f0f0f0"/><rect x="6.2" y="3.5" width="2.2" height="2.2" fill="#f0f0f0"/><rect x="6.2" y="6.7" width="2.2" height="2.2" fill="#f0f0f0"/><rect x="6.2" y="9.9" width="2.2" height="2.2" fill="#f0f0f0"/><rect x="9.4" y="3.5" width="2.2" height="2.2" fill="#f0f0f0"/><rect x="9.4" y="6.7" width="2.2" height="2.2" fill="#f0f0f0"/><rect x="9.4" y="9.9" width="2.2" height="2.2" fill="#f0f0f0"/></svg><svg class="r" style="left:719.8px;top:124.4px;" width="140" height="64" viewBox="0 0 140 64"><defs><linearGradient id="sg1"><stop offset="0" stop-color="#000"/><stop offset=".5" stop-color="#fff"/><stop offset="1" stop-color="#888"/></linearGradient><linearGradient id="sg2"><stop offset="0" stop-color="#e8d030"/><stop offset=".5" stop-color="#f0a030"/><stop offset="1" stop-color="#a05020"/></linearGradient><linearGradient id="sg3"><stop offset="0" stop-color="#3070c0"/><stop offset="1" stop-color="#e0f0ff"/></linearGradient></defs><rect x="0.00" y="0.00" width="7.97" height="7.97" fill="#fff"/><path d="M0.00,7.97 L7.97,0.00" stroke="#e22" stroke-width="1"/><rect x="8.67" y="0.00" width="7.97" height="7.97" fill="#fff"/><path d="M12.67,1.00 V7.00 M9.67,4.00 H15.67" stroke="#000" stroke-width="0.8"/><rect x="17.34" y="0.00" width="7.97" height="7.97" fill="#ffffff"/><rect x="26.01" y="0.00" width="7.97" height="7.97" fill="#000000"/><rect x="34.68" y="0.00" width="7.97" height="7.97" fill="#d7262b"/><rect x="43.35" y="0.00" width="7.97" height="7.97" fill="#f3e532"/><rect x="52.02" y="0.00" width="7.97" height="7.97" fill="#22a24a"/><rect x="60.69" y="0.00" width="7.97" height="7.97" fill="#2aa8e0"/><rect x="69.36" y="0.00" width="7.97" height="7.97" fill="#29378f"/><rect x="78.03" y="0.00" width="7.97" height="7.97" fill="#cf2088"/><rect x="86.70" y="0.00" width="7.97" height="7.97" fill="#bf1f33"/><rect x="95.37" y="0.00" width="7.97" height="7.97" fill="#e03b33"/><rect x="104.04" y="0.00" width="7.97" height="7.97" fill="#e85a2b"/><rect x="112.71" y="0.00" width="7.97" height="7.97" fill="#e8922d"/><rect x="121.38" y="0.00" width="7.97" height="7.97" fill="#eaa852"/><rect x="0.00" y="8.67" width="7.97" height="7.97" fill="#ebe232"/><rect x="8.67" y="8.67" width="7.97" height="7.97" fill="#bcd232"/><rect x="17.34" y="8.67" width="7.97" height="7.97" fill="#8dc63f"/><rect x="26.01" y="8.67" width="7.97" height="7.97" fill="#4bb04a"/><rect x="34.68" y="8.67" width="7.97" height="7.97" fill="#2f9e4a"/><rect x="43.35" y="8.67" width="7.97" height="7.97" fill="#1e6c3a"/><rect x="52.02" y="8.67" width="7.97" height="7.97" fill="#41b883"/><rect x="60.69" y="8.67" width="7.97" height="7.97" fill="#2fa8a0"/><rect x="69.36" y="8.67" width="7.97" height="7.97" fill="#3fa9e0"/><rect x="78.03" y="8.67" width="7.97" height="7.97" fill="#2e6fbf"/><rect x="86.70" y="8.67" width="7.97" height="7.97" fill="#2b3a97"/><rect x="95.37" y="8.67" width="7.97" height="7.97" fill="#3b2a7f"/><rect x="104.04" y="8.67" width="7.97" height="7.97" fill="#6a2b8f"/><rect x="112.71" y="8.67" width="7.97" height="7.97" fill="#8b288f"/><rect x="121.38" y="8.67" width="7.97" height="7.97" fill="#9e2071"/><rect x="0.00" y="17.34" width="7.97" height="7.97" fill="#b12161"/><rect x="8.67" y="17.34" width="7.97" height="7.97" fill="#d02a82"/><rect x="17.34" y="17.34" width="7.97" height="7.97" fill="#c2b3a3"/><rect x="26.01" y="17.34" width="7.97" height="7.97" fill="#9b8b80"/><rect x="34.68" y="17.34" width="7.97" height="7.97" fill="#6f6458"/><rect x="43.35" y="17.34" width="7.97" height="7.97" fill="#594a40"/><rect x="52.02" y="17.34" width="7.97" height="7.97" fill="#c29263"/><rect x="60.69" y="17.34" width="7.97" height="7.97" fill="#a97b4a"/><rect x="69.36" y="17.34" width="7.97" height="7.97" fill="#8a5b31"/><rect x="78.03" y="17.34" width="7.97" height="7.97" fill="#6b4121"/><rect x="86.70" y="17.34" width="7.97" height="7.97" fill="#533119"/><rect x="95.37" y="17.34" width="7.97" height="7.97" fill="#3b2a1b"/><rect x="104.04" y="17.34" width="7.97" height="7.97" fill="url(#sg1)"/><rect x="112.71" y="17.34" width="7.97" height="7.97" fill="url(#sg2)"/><rect x="121.38" y="17.34" width="7.97" height="7.97" fill="url(#sg3)"/><rect x="0" y="26.01" width="7.97" height="7.97" fill="#111"/><circle cx="3.98" cy="29.99" r="2.6" fill="#fff"/><rect x="8.67" y="26.01" width="7.97" height="7.97" fill="#7fb04a"/><circle cx="13.00" cy="30.34" r="2" fill="#d9e8a0"/><rect x="17.34" y="26.01" width="7.97" height="7.97" fill="#9a8a6a"/><path d="M18.34,28.01 l2,2 l2,-1 l2,3" stroke="#d8c8a0" stroke-width="1" fill="none"/><path d="M1,38.10 H3.5 L4.5,39.10 H7.5 V43.10 H1Z" fill="#bbb"/><path d="M1,47.80 H3.5 L4.5,48.80 H7.5 V52.80 H1Z" fill="#bbb"/><path d="M1,57.50 H3.5 L4.5,58.50 H7.5 V62.50 H1Z" fill="#bbb"/><rect x="8.67" y="35.60" width="7.97" height="7.97" fill="#000000"/><rect x="17.34" y="35.60" width="7.97" height="7.97" fill="#303030"/><rect x="26.01" y="35.60" width="7.97" height="7.97" fill="#484848"/><rect x="34.68" y="35.60" width="7.97" height="7.97" fill="#6a6a6a"/><rect x="43.35" y="35.60" width="7.97" height="7.97" fill="#7a7a7a"/><rect x="52.02" y="35.60" width="7.97" height="7.97" fill="#8a8a8a"/><rect x="60.69" y="35.60" width="7.97" height="7.97" fill="#9d9d9d"/><rect x="69.36" y="35.60" width="7.97" height="7.97" fill="#b0b0b0"/><rect x="78.03" y="35.60" width="7.97" height="7.97" fill="#c4c4c4"/><rect x="86.70" y="35.60" width="7.97" height="7.97" fill="#d6d6d6"/><rect x="95.37" y="35.60" width="7.97" height="7.97" fill="#e8e8e8"/><rect x="104.04" y="35.60" width="7.97" height="7.97" fill="#f4f4f4"/><rect x="8.67" y="45.30" width="7.97" height="7.97" fill="#d7262b"/><rect x="17.34" y="45.30" width="7.97" height="7.97" fill="#e8602b"/><rect x="26.01" y="45.30" width="7.97" height="7.97" fill="#f3e532"/><rect x="34.68" y="45.30" width="7.97" height="7.97" fill="#22a24a"/><rect x="43.35" y="45.30" width="7.97" height="7.97" fill="#29378f"/><rect x="52.02" y="45.30" width="7.97" height="7.97" fill="#7b2a93"/><rect x="8.67" y="55.00" width="7.97" height="7.97" fill="#c8282a"/><circle cx="11.17" cy="57.50" r="1.5" fill="#f0d850"/><circle cx="14.47" cy="60.50" r="1.6" fill="#f0d850"/><rect x="17.34" y="55.00" width="7.97" height="7.97" fill="#c8282a"/><circle cx="19.84" cy="57.50" r="1.5" fill="#f0d850"/><circle cx="23.14" cy="60.50" r="1.6" fill="#f0d850"/><rect x="26.01" y="55.00" width="7.97" height="7.97" fill="#222"/><circle cx="30.01" cy="59.00" r="2.6" fill="#c8282a"/></svg><div class="r" style="left:716px;top:216px;width:149px;height:0.8px;background:#404040;"></div><svg class="r" style="left:716px;top:218px;" width="149" height="12" viewBox="0 0 149 12"><path d="M8,10 V4 L11,2 L14,4 V10 M10,10 V6 M12,10 V6" stroke="#bbb" stroke-width="0.9" fill="none"/><circle cx="15.5" cy="9.5" r="0.6" fill="#bbb"/><path d="M24,3 H30 V9 H24Z M26,6 H28" stroke="#666" stroke-width="0.9" fill="none"/><rect x="58" y="2.5" width="7" height="7" fill="#aaa"/><rect x="59.5" y="4" width="2" height="2" fill="#4a4a4a"/><circle cx="66" cy="9.5" r="0.6" fill="#bbb"/><rect x="75" y="2.5" width="7" height="8" fill="none" stroke="#666" stroke-width="0.8"/><path d="M92,4 H95.5 L96.5,5 H100 V10 H92Z" fill="#aaa"/><rect x="108.5" y="2.5" width="7.5" height="7.5" fill="none" stroke="#ccc" stroke-width="0.9"/><path d="M112.25,4.2 V8.3 M110.2,6.25 H114.3" stroke="#ccc" stroke-width="0.9"/><path d="M124.5,4 H131.5 M125.5,4 V10 H130.5 V4" stroke="#666" stroke-width="0.9" fill="none"/></svg><div class="r" style="left:165.3px;top:231px;width:178px;height:276.7px;background:#4a4a4a;box-shadow:0 2px 4px rgba(0,0,0,.45);border-radius:2px"></div><div class="r" style="left:165.3px;top:231px;width:178px;height:8.6px;background:#383838;"></div><div class="r" style="left:165.3px;top:239.6px;width:178px;height:16.5px;background:#3c3c3c;"></div><div class="r" style="left:165.3px;top:239.6px;width:60.7px;height:16.8px;background:#4a4a4a;"></div><svg class="r" style="left:167px;top:232.5px;" width="8" height="7" viewBox="0 0 8 7"><path d="M2,1.5 L6,5.5 M6,1.5 L2,5.5" stroke="#aaa" stroke-width="0.8"/></svg><svg class="r" style="left:333px;top:232.5px;" width="8" height="7" viewBox="0 0 8 7"><path d="M4,1.5 L2,3.5 L4,5.5 M7,1.5 L5,3.5 L7,5.5" stroke="#999" stroke-width="0.7" fill="none"/></svg><div class="t" style="left:171.4px;top:242.4px;font-size:6.55px;color:#f2f2f2;font-weight:bold;-webkit-text-stroke-width:0.04px;">Pattern Options</div><svg class="r" style="left:331px;top:244px;" width="11" height="9" viewBox="0 0 11 9"><path d="M1.5,2 H9.5 M1.5,4.5 H9.5 M1.5,7 H9.5" stroke="#888" stroke-width="0.9"/></svg><div class="r" style="left:171px;top:261.4px;width:14.5px;height:14.6px;background:#454545;"></div><svg class="r" style="left:171px;top:261.4px;" width="15" height="15" viewBox="0 0 15 15"><rect x="3" y="3.5" width="3.5" height="3" fill="none" stroke="#ddd" stroke-width="0.8"/><rect x="8.5" y="3.5" width="3.5" height="3" fill="none" stroke="#ddd" stroke-width="0.8"/><path d="M3,10 H12 M3,10 L4.5,8.8 M3,10 L4.5,11.2 M12,10 L10.5,8.8 M12,10 L10.5,11.2" stroke="#ddd" stroke-width="0.7" fill="none"/></svg><div class="r" style="left:246px;top:262.7px;width:93.8px;height:13.3px;background:#474747;"></div><svg class="r" style="left:249px;top:264px;" width="11" height="11" viewBox="0 0 11 11"><path d="M1,3 V1 H3 M8,1 H10 V3 M10,8 V10 H8 M3,10 H1 V8" stroke="#777" stroke-width="0.8" fill="none"/><circle cx="4" cy="4" r="0.8" fill="#777"/><circle cx="7" cy="7" r="0.8" fill="#777"/><circle cx="4" cy="7" r="0.8" fill="#777"/></svg><div class="t" style="left:263.3px;top:264.3px;font-size:6.37px;color:#7c7c7c;font-weight:normal;">Generate Patterns (Beta)</div><div class="t" style="left:186.2px;top:285.8px;font-size:6.4px;color:#d0d0d0;font-weight:normal;">Name:</div><div class="r" style="left:208.6px;top:285.7px;width:131.2px;height:11px;background:#393939;"></div><div class="t" style="left:211.5px;top:285.8px;font-size:6.6px;color:#f0f0f0;font-weight:normal;">Generated Pattern 3</div><div class="t" style="left:177px;top:302.4px;font-size:6.54px;color:#777;font-weight:normal;">Tile Type:</div><div class="r" style="left:208.6px;top:302.7px;width:94.7px;height:10.5px;background:#4e4e4e;"></div><svg class="r" style="left:210.5px;top:304.5px;" width="8" height="7" viewBox="0 0 8 7"><rect x="0.5" y="0.5" width="6" height="6" fill="none" stroke="#777" stroke-width="0.7"/><path d="M2.5,0.5 V6.5 M4.5,0.5 V6.5 M0.5,3.5 H6.5" stroke="#777" stroke-width="0.6"/></svg><div class="t" style="left:222px;top:302.4px;font-size:6.5px;color:#777;font-weight:normal;">Grid</div><svg class="r" style="left:294px;top:305px;" width="8" height="6" viewBox="0 0 8 6"><path d="M1.5,1.5 L4,4 L6.5,1.5" stroke="#666" stroke-width="0.8" fill="none"/></svg><div class="t" style="left:169.2px;top:318.7px;font-size:6.6px;color:#777;font-weight:normal;">Brick Offset:</div><div class="r" style="left:208.6px;top:318.7px;width:60px;height:10.5px;background:#4e4e4e;"></div><div class="t" style="left:212px;top:318.7px;font-size:6.5px;color:#777;font-weight:normal;">1/2</div><svg class="r" style="left:260px;top:321px;" width="8" height="6" viewBox="0 0 8 6"><path d="M1.5,1.5 L4,4 L6.5,1.5" stroke="#666" stroke-width="0.8" fill="none"/></svg><svg class="r" style="left:308.7px;top:301.5px;" width="31.2" height="31.6" viewBox="0 0 31.2 31.6"><rect width="31.2" height="31.6" fill="#c8202a"/><path d="M3,3 L28,28 M28,3 L3,28" stroke="#5f8388" stroke-width="3.2"/><polygon points="15.60,-5.50 17.07,-2.06 20.55,-3.45 19.16,0.03 22.60,1.50 19.16,2.97 20.55,6.45 17.07,5.06 15.60,8.50 14.13,5.06 10.65,6.45 12.04,2.97 8.60,1.50 12.04,0.03 10.65,-3.45 14.13,-2.06" fill="#f3df72"/><polygon points="15.60,23.50 17.07,26.94 20.55,25.55 19.16,29.03 22.60,30.50 19.16,31.97 20.55,35.45 17.07,34.06 15.60,37.50 14.13,34.06 10.65,35.45 12.04,31.97 8.60,30.50 12.04,29.03 10.65,25.55 14.13,26.94" fill="#f3df72"/><polygon points="0.50,8.80 1.97,12.24 5.45,10.85 4.06,14.33 7.50,15.80 4.06,17.27 5.45,20.75 1.97,19.36 0.50,22.80 -0.97,19.36 -4.45,20.75 -3.06,17.27 -6.50,15.80 -3.06,14.33 -4.45,10.85 -0.97,12.24" fill="#f3df72"/><polygon points="30.70,8.80 32.17,12.24 35.65,10.85 34.26,14.33 37.70,15.80 34.26,17.27 35.65,20.75 32.17,19.36 30.70,22.80 29.23,19.36 25.75,20.75 27.14,17.27 23.70,15.80 27.14,14.33 25.75,10.85 29.23,12.24" fill="#f3df72"/><path d="M9,31.6 L12,24 L15.6,28 L19,24 L22,31.6Z" fill="#6a9090"/><path d="M9,0 L12,7 L15.6,3.5 L19,7 L22,0Z" fill="#6a9090"/></svg><div class="t" style="left:186.2px;top:341.3px;font-size:6.63px;color:#d0d0d0;font-weight:normal;">Width:</div><div class="r" style="left:208.6px;top:341.1px;width:63.2px;height:10.8px;background:#393939;"></div><div class="t" style="left:211px;top:341.3px;font-size:7.0px;color:#f0f0f0;font-weight:normal;">90,3111 mm</div><div class="t" style="left:183.8px;top:357.8px;font-size:6.69px;color:#d0d0d0;font-weight:normal;">Height:</div><div class="r" style="left:208.6px;top:357.4px;width:63.2px;height:10.9px;background:#393939;"></div><div class="t" style="left:211px;top:357.6px;font-size:7.0px;color:#f0f0f0;font-weight:normal;">90,3111 mm</div><svg class="r" style="left:279px;top:349px;" width="10" height="12" viewBox="0 0 10 12"><path d="M3,1.5 L6,4 M4.5,5.5 L3,4 L5.5,1.5 M7,8 L4,5.5 M5.5,4 L7,5.5 L4.5,8 M2,3 L8,9" stroke="#ccc" stroke-width="0.8" fill="none"/></svg><svg class="r" style="left:208.5px;top:373.3px;" width="7.4" height="7.4" viewBox="0 0 7.4 7.4"><rect x="0.5" y="0.5" width="6.4" height="6.4" rx="1.2" fill="none" stroke="#bdbdbd" stroke-width="0.9"/></svg><div class="t" style="left:218.8px;top:371.6px;font-size:6.88px;color:#d8d8d8;font-weight:normal;">Size Tile to Art</div><svg class="r" style="left:208.5px;top:385.5px;" width="7.4" height="7.4" viewBox="0 0 7.4 7.4"><rect x="0.5" y="0.5" width="6.4" height="6.4" rx="1.2" fill="#d8d8d8"/><path d="M1.6,3.6 L3,5.2 L5.6,1.8" stroke="#333" stroke-width="1.1" fill="none"/></svg><div class="t" style="left:218.8px;top:383.8px;font-size:6.9px;color:#d8d8d8;font-weight:normal;">Move Tile with Art</div><div class="t" style="left:174px;top:398.8px;font-size:6.34px;color:#6f6f6f;font-weight:normal;">H Spacing:</div><div class="r" style="left:208.6px;top:398.5px;width:63px;height:11px;background:#4d4d4d;"></div><div class="t" style="left:174px;top:414.8px;font-size:6.34px;color:#6f6f6f;font-weight:normal;">V Spacing:</div><div class="r" style="left:208.6px;top:414.5px;width:63px;height:11px;background:#4d4d4d;"></div><svg class="r" style="left:279px;top:404px;" width="10" height="12" viewBox="0 0 10 12"><path d="M3,1.5 L6,4 M4.5,5.5 L3,4 L5.5,1.5 M7,8 L4,5.5 M5.5,4 L7,5.5 L4.5,8 M2,3 L8,9" stroke="#666" stroke-width="0.8" fill="none"/></svg><div class="t" style="left:181px;top:430.8px;font-size:6.4px;color:#d0d0d0;font-weight:normal;">Overlap:</div><div class="r" style="left:208.5px;top:430px;width:11.5px;height:12px;background:#2c2c2c;"></div><div class="r" style="left:238.5px;top:430px;width:11.5px;height:12px;background:#2c2c2c;"></div><svg class="r" style="left:208px;top:429px;" width="60" height="14" viewBox="0 0 60 14"><path d="M3,7 L6,4 L9,7 L6,10Z" fill="#eee"/><path d="M6,4 L11,7 L6,10" stroke="#eee" stroke-width="0.8" fill="none"/><path d="M18,7 L21,4 L24,7 L21,10Z" fill="none" stroke="#bbb" stroke-width="0.8"/><path d="M16,7 L19,4.5 V9.5Z" fill="#bbb"/><path d="M36,4 L39,7 L36,10 L33,7Z" fill="#eee"/><path d="M33,5 L36,2 L39,5" stroke="#eee" stroke-width="0.8" fill="none"/><path d="M51,5 L54,8 L51,11 L48,8Z" fill="none" stroke="#bbb" stroke-width="0.8"/><path d="M49,4 L51,2 L53,4" fill="#bbb"/></svg><div class="t" style="left:183.3px;top:452.1px;font-size:6.5px;color:#d0d0d0;font-weight:normal;">Copies:</div><div class="r" style="left:208.3px;top:451.5px;width:45px;height:11.5px;background:#4a4a4a;"></div><div class="t" style="left:212.3px;top:452.1px;font-size:6.9px;color:#e8e8e8;font-weight:normal;">5 x 5</div><svg class="r" style="left:244px;top:454px;" width="8" height="6" viewBox="0 0 8 6"><path d="M1.5,1.5 L4,4 L6.5,1.5" stroke="#ccc" stroke-width="0.8" fill="none"/></svg><svg class="r" style="left:208px;top:469px;" width="7.4" height="7.4" viewBox="0 0 7.4 7.4"><rect x="0.5" y="0.5" width="6.4" height="6.4" rx="1.2" fill="#d8d8d8"/><path d="M1.6,3.6 L3,5.2 L5.6,1.8" stroke="#333" stroke-width="1.1" fill="none"/></svg><div class="t" style="left:219px;top:467.5px;font-size:6.76px;color:#d8d8d8;font-weight:normal;">Dim Copies to:</div><div class="r" style="left:265.7px;top:467.3px;width:31px;height:10.8px;background:#3d3d3d;"></div><div class="t" style="left:268.5px;top:467.5px;font-size:6.2px;color:#e8e8e8;font-weight:normal;">70%</div><svg class="r" style="left:298px;top:470px;" width="8" height="6" viewBox="0 0 8 6"><path d="M1.5,1.5 L4,4 L6.5,1.5" stroke="#ccc" stroke-width="0.8" fill="none"/></svg><svg class="r" style="left:208px;top:483.3px;" width="7.4" height="7.4" viewBox="0 0 7.4 7.4"><rect x="0.5" y="0.5" width="6.4" height="6.4" rx="1.2" fill="#d8d8d8"/><path d="M1.6,3.6 L3,5.2 L5.6,1.8" stroke="#333" stroke-width="1.1" fill="none"/></svg><div class="t" style="left:219px;top:481.8px;font-size:6.4px;color:#d8d8d8;font-weight:normal;">Show Tile Edge</div><svg class="r" style="left:208px;top:495.6px;" width="7.4" height="7.4" viewBox="0 0 7.4 7.4"><rect x="0.5" y="0.5" width="6.4" height="6.4" rx="1.2" fill="none" stroke="#bdbdbd" stroke-width="0.9"/></svg><div class="t" style="left:219px;top:494.1px;font-size:6.35px;color:#d8d8d8;font-weight:normal;">Show Swatch Bounds</div><div class="r" style="left:566px;top:150.4px;width:147px;height:260px;background:#4a4a4a;box-shadow:0 2px 4px rgba(0,0,0,.5);border-radius:2px"></div><div class="r" style="left:566px;top:150.4px;width:147px;height:8px;background:#383838;"></div><div class="r" style="left:566px;top:158.4px;width:147px;height:16.8px;background:#3c3c3c;"></div><div class="r" style="left:567.5px;top:158.4px;width:85.6px;height:17px;background:#4a4a4a;"></div><svg class="r" style="left:568px;top:151.5px;" width="8" height="7" viewBox="0 0 8 7"><path d="M2,1.5 L6,5.5 M6,1.5 L2,5.5" stroke="#aaa" stroke-width="0.8"/></svg><svg class="r" style="left:703px;top:151.5px;" width="8" height="7" viewBox="0 0 8 7"><path d="M4,1.5 L2,3.5 L4,5.5 M7,1.5 L5,3.5 L7,5.5" stroke="#999" stroke-width="0.7" fill="none"/></svg><div class="t" style="left:571.9px;top:161.6px;font-size:6.52px;color:#f2f2f2;font-weight:bold;-webkit-text-stroke-width:0.04px;">Generate Patterns (Beta)</div><svg class="r" style="left:700.5px;top:162.5px;" width="11" height="9" viewBox="0 0 11 9"><path d="M1.5,2 H9.5 M1.5,4.5 H9.5 M1.5,7 H9.5" stroke="#888" stroke-width="0.9"/></svg><div class="t" style="left:571.9px;top:182.3px;font-size:6.8px;color:#c8c8c8;font-weight:normal;">Prompt</div><div class="r" style="left:573.4px;top:195.6px;width:132.7px;height:29.1px;background:#3a3a3a;border-radius:1px"></div><div class="t" style="left:575.5px;top:198.0px;font-size:6.89px;color:#f0f0f0;font-weight:normal;">yellow flowers with green leafs on a</div><div class="t" style="left:575.5px;top:209.2px;font-size:6.85px;color:#f0f0f0;font-weight:normal;">red background</div><svg class="r" style="left:692px;top:205px;" width="9" height="9" viewBox="0 0 9 9"><path d="M2,2 L7,7 M7,2 L2,7" stroke="#ddd" stroke-width="0.9"/></svg><svg class="r" style="left:573px;top:231px;" width="52" height="15" viewBox="0 0 52 15"><path d="M3,9.5 C2,5 9,3.5 12,6 C13.5,7.5 12.5,9.5 10.5,9.5 C9,9.5 9.5,11 8,11 C5.5,11 3.5,10.5 3,9.5Z" fill="none" stroke="#ddd" stroke-width="0.9"/><circle cx="6" cy="7.5" r="0.8" fill="#ddd"/><circle cx="8.5" cy="6.5" r="0.8" fill="#ddd"/><rect x="23" y="3" width="3" height="3" fill="#ddd"/><rect x="23" y="9" width="3" height="3" fill="#ddd"/><rect x="29" y="9" width="3" height="3" fill="#ddd"/><path d="M29,3 L32,6 M32,3 L29,6" stroke="#ddd" stroke-width="0.8"/><circle cx="44.8" cy="7.3" r="3.6" fill="#ddd"/><rect x="43.9" y="2" width="1.8" height="2.4" fill="#ddd" transform="rotate(0 44.8 7.3)"/><rect x="43.9" y="2" width="1.8" height="2.4" fill="#ddd" transform="rotate(45 44.8 7.3)"/><rect x="43.9" y="2" width="1.8" height="2.4" fill="#ddd" transform="rotate(90 44.8 7.3)"/><rect x="43.9" y="2" width="1.8" height="2.4" fill="#ddd" transform="rotate(135 44.8 7.3)"/><rect x="43.9" y="2" width="1.8" height="2.4" fill="#ddd" transform="rotate(180 44.8 7.3)"/><rect x="43.9" y="2" width="1.8" height="2.4" fill="#ddd" transform="rotate(225 44.8 7.3)"/><rect x="43.9" y="2" width="1.8" height="2.4" fill="#ddd" transform="rotate(270 44.8 7.3)"/><rect x="43.9" y="2" width="1.8" height="2.4" fill="#ddd" transform="rotate(315 44.8 7.3)"/><circle cx="44.8" cy="7.3" r="1.2" fill="#4a4a4a"/></svg><div class="r" style="left:628.5px;top:229px;width:78px;height:17.7px;background:#474747;border:1px solid #5a5a5a;box-sizing:border-box;border-radius:2px"></div><svg class="r" style="left:646px;top:232px;" width="12" height="12" viewBox="0 0 12 12"><path d="M5,2.5 H2 V10 H9.5 V7" stroke="#ddd" stroke-width="0.9" fill="none"/><path d="M4.5,7.5 L9,3 M6.5,3 H9 V5.5" stroke="#ddd" stroke-width="0.9" fill="none"/><path d="M10,0.5 L10.5,1.8 L11.8,2.3 L10.5,2.8 L10,4 L9.5,2.8 L8.2,2.3 L9.5,1.8Z" fill="#ddd"/></svg><div class="t" style="left:659.6px;top:232.7px;font-size:6.6px;color:#f0f0f0;font-weight:normal;">Generate</div><div class="r" style="left:571px;top:252.5px;width:137px;height:0.8px;background:#404040;"></div><div class="r" style="left:571.8px;top:254px;width:135px;height:128px;background:#484848;border:1px solid #545454;box-sizing:border-box"></div><div class="t" style="left:575px;top:256.2px;font-size:6.9px;color:#c8c8c8;font-weight:normal;">Variations</div><svg class="r" style="left:572.5px;top:268.5px;" width="42.7" height="42.7" viewBox="0 0 42.7 42.7"><rect x="0.6" y="0.6" width="41.5" height="41.5" fill="#cf2029" stroke="#151515" stroke-width="1.2"/><clipPath id="tc572"><rect x="1.2" y="1.2" width="40.3" height="40.3"/></clipPath><g clip-path="url(#tc572)"><polygon points="21.90,1.70 23.44,3.57 25.86,3.34 25.63,5.76 27.50,7.30 25.63,8.84 25.86,11.26 23.44,11.03 21.90,12.90 20.36,11.03 17.94,11.26 18.17,8.84 16.30,7.30 18.17,5.76 17.94,3.34 20.36,3.57" fill="#f4e04e"/><circle cx="21.9" cy="7.3" r="1.96" fill="#e6cf3a"/><ellipse cx="20.8" cy="17.64" rx="2.92" ry="5.47" fill="#5e8a78" transform="rotate(60 20.8 25.3)"/><ellipse cx="20.8" cy="17.64" rx="2.92" ry="5.47" fill="#5e8a78" transform="rotate(120 20.8 25.3)"/><ellipse cx="20.8" cy="17.64" rx="2.92" ry="5.47" fill="#5e8a78" transform="rotate(-110 20.8 25.3)"/><polygon points="20.80,18.00 22.81,20.44 25.96,20.14 25.66,23.29 28.10,25.30 25.66,27.31 25.96,30.46 22.81,30.16 20.80,32.60 18.79,30.16 15.64,30.46 15.94,27.31 13.50,25.30 15.94,23.29 15.64,20.14 18.79,20.44" fill="#f4e04e"/><circle cx="20.8" cy="25.3" r="2.55" fill="#e6cf3a"/><ellipse cx="3.4" cy="-1.85" rx="2.00" ry="3.75" fill="#5e8a78" transform="rotate(150 3.4 3.4)"/><polygon points="3.40,-1.60 4.78,0.07 6.94,-0.14 6.73,2.02 8.40,3.40 6.73,4.78 6.94,6.94 4.78,6.73 3.40,8.40 2.02,6.73 -0.14,6.94 0.07,4.78 -1.60,3.40 0.07,2.02 -0.14,-0.14 2.02,0.07" fill="#f4e04e"/><circle cx="3.4" cy="3.4" r="1.75" fill="#e6cf3a"/><polygon points="37.70,-1.10 39.08,0.57 41.24,0.36 41.03,2.52 42.70,3.90 41.03,5.28 41.24,7.44 39.08,7.23 37.70,8.90 36.32,7.23 34.16,7.44 34.37,5.28 32.70,3.90 34.37,2.52 34.16,0.36 36.32,0.57" fill="#f4e04e"/><circle cx="37.7" cy="3.9" r="1.75" fill="#e6cf3a"/><polygon points="2.20,16.40 3.72,18.24 6.09,18.01 5.86,20.38 7.70,21.90 5.86,23.42 6.09,25.79 3.72,25.56 2.20,27.40 0.68,25.56 -1.69,25.79 -1.46,23.42 -3.30,21.90 -1.46,20.38 -1.69,18.01 0.68,18.24" fill="#f4e04e"/><circle cx="2.2" cy="21.9" r="1.92" fill="#e6cf3a"/><polygon points="39.90,17.00 41.42,18.84 43.79,18.61 43.56,20.98 45.40,22.50 43.56,24.02 43.79,26.39 41.42,26.16 39.90,28.00 38.38,26.16 36.01,26.39 36.24,24.02 34.40,22.50 36.24,20.98 36.01,18.61 38.38,18.84" fill="#f4e04e"/><circle cx="39.9" cy="22.5" r="1.92" fill="#e6cf3a"/><polygon points="3.40,35.00 4.78,36.67 6.94,36.46 6.73,38.62 8.40,40.00 6.73,41.38 6.94,43.54 4.78,43.33 3.40,45.00 2.02,43.33 -0.14,43.54 0.07,41.38 -1.60,40.00 0.07,38.62 -0.14,36.46 2.02,36.67" fill="#f4e04e"/><circle cx="3.4" cy="40" r="1.75" fill="#e6cf3a"/><polygon points="38.20,33.80 39.58,35.47 41.74,35.26 41.53,37.42 43.20,38.80 41.53,40.18 41.74,42.34 39.58,42.13 38.20,43.80 36.82,42.13 34.66,42.34 34.87,40.18 33.20,38.80 34.87,37.42 34.66,35.26 36.82,35.47" fill="#f4e04e"/><circle cx="38.2" cy="38.8" r="1.75" fill="#e6cf3a"/></g></svg><svg class="r" style="left:618px;top:268.5px;" width="42.7" height="42.7" viewBox="0 0 42.7 42.7"><rect x="0.6" y="0.6" width="41.5" height="41.5" fill="#cf2029" stroke="#151515" stroke-width="1.2"/><clipPath id="tc618"><rect x="1.2" y="1.2" width="40.3" height="40.3"/></clipPath><g clip-path="url(#tc618)"><ellipse cx="4.5" cy="2.70" rx="2.40" ry="4.50" fill="#5e8a78" transform="rotate(40 4.5 9)"/><polygon points="4.50,3.00 6.15,5.01 8.74,4.76 8.49,7.35 10.50,9.00 8.49,10.65 8.74,13.24 6.15,12.99 4.50,15.00 2.85,12.99 0.26,13.24 0.51,10.65 -1.50,9.00 0.51,7.35 0.26,4.76 2.85,5.01" fill="#f4e04e"/><circle cx="4.5" cy="9" r="2.10" fill="#e6cf3a"/><ellipse cx="24.7" cy="-1.88" rx="2.20" ry="4.12" fill="#5e8a78" transform="rotate(-60 24.7 3.9)"/><polygon points="24.70,-1.60 26.22,0.24 28.59,0.01 28.36,2.38 30.20,3.90 28.36,5.42 28.59,7.79 26.22,7.56 24.70,9.40 23.18,7.56 20.81,7.79 21.04,5.42 19.20,3.90 21.04,2.38 20.81,0.01 23.18,0.24" fill="#f4e04e"/><circle cx="24.7" cy="3.9" r="1.92" fill="#e6cf3a"/><polygon points="38.80,5.20 40.32,7.04 42.69,6.81 42.46,9.18 44.30,10.70 42.46,12.22 42.69,14.59 40.32,14.36 38.80,16.20 37.28,14.36 34.91,14.59 35.14,12.22 33.30,10.70 35.14,9.18 34.91,6.81 37.28,7.04" fill="#f4e04e"/><circle cx="38.8" cy="10.7" r="1.92" fill="#e6cf3a"/><ellipse cx="23.6" cy="13.52" rx="3.00" ry="5.62" fill="#5e8a78" transform="rotate(-40 23.6 21.4)"/><ellipse cx="23.6" cy="13.52" rx="3.00" ry="5.62" fill="#5e8a78" transform="rotate(40 23.6 21.4)"/><ellipse cx="23.6" cy="13.52" rx="3.00" ry="5.62" fill="#5e8a78" transform="rotate(130 23.6 21.4)"/><polygon points="23.60,13.90 25.67,16.41 28.90,16.10 28.59,19.33 31.10,21.40 28.59,23.47 28.90,26.70 25.67,26.39 23.60,28.90 21.53,26.39 18.30,26.70 18.61,23.47 16.10,21.40 18.61,19.33 18.30,16.10 21.53,16.41" fill="#f4e04e"/><circle cx="23.6" cy="21.4" r="2.62" fill="#e6cf3a"/><ellipse cx="6.2" cy="25.78" rx="2.60" ry="4.88" fill="#5e8a78" transform="rotate(30 6.2 32.6)"/><polygon points="6.20,26.10 7.99,28.28 10.80,28.00 10.52,30.81 12.70,32.60 10.52,34.39 10.80,37.20 7.99,36.92 6.20,39.10 4.41,36.92 1.60,37.20 1.88,34.39 -0.30,32.60 1.88,30.81 1.60,28.00 4.41,28.28" fill="#f4e04e"/><circle cx="6.2" cy="32.6" r="2.27" fill="#e6cf3a"/><ellipse cx="24.7" cy="31.40" rx="2.40" ry="4.50" fill="#5e8a78" transform="rotate(-50 24.7 37.7)"/><ellipse cx="24.7" cy="31.40" rx="2.40" ry="4.50" fill="#5e8a78" transform="rotate(50 24.7 37.7)"/><polygon points="24.70,31.70 26.35,33.71 28.94,33.46 28.69,36.05 30.70,37.70 28.69,39.35 28.94,41.94 26.35,41.69 24.70,43.70 23.05,41.69 20.46,41.94 20.71,39.35 18.70,37.70 20.71,36.05 20.46,33.46 23.05,33.71" fill="#f4e04e"/><circle cx="24.7" cy="37.7" r="2.10" fill="#e6cf3a"/><polygon points="39.90,24.20 41.28,25.87 43.44,25.66 43.23,27.82 44.90,29.20 43.23,30.58 43.44,32.74 41.28,32.53 39.90,34.20 38.52,32.53 36.36,32.74 36.57,30.58 34.90,29.20 36.57,27.82 36.36,25.66 38.52,25.87" fill="#f4e04e"/><circle cx="39.9" cy="29.2" r="1.75" fill="#e6cf3a"/></g></svg><svg class="r" style="left:663.4px;top:268.5px;" width="42.7" height="42.7" viewBox="0 0 42.7 42.7"><rect x="0.6" y="0.6" width="41.5" height="41.5" fill="#cf5d63" stroke="#7183c4" stroke-width="1.2"/><clipPath id="tc663"><rect x="1.2" y="1.2" width="40.3" height="40.3"/></clipPath><g clip-path="url(#tc663)"><polygon points="22.80,-1.50 24.73,0.84 27.75,0.55 27.46,3.57 29.80,5.50 27.46,7.43 27.75,10.45 24.73,10.16 22.80,12.50 20.87,10.16 17.85,10.45 18.14,7.43 15.80,5.50 18.14,3.57 17.85,0.55 20.87,0.84" fill="#f2e6a6"/><circle cx="22.8" cy="5.5" r="2.45" fill="#e6cf3a"/><ellipse cx="6.5" cy="13.45" rx="2.80" ry="5.25" fill="#8ea3a6" transform="rotate(60 6.5 20.8)"/><ellipse cx="6.5" cy="13.45" rx="2.80" ry="5.25" fill="#8ea3a6" transform="rotate(120 6.5 20.8)"/><polygon points="6.50,13.80 8.43,16.14 11.45,15.85 11.16,18.87 13.50,20.80 11.16,22.73 11.45,25.75 8.43,25.46 6.50,27.80 4.57,25.46 1.55,25.75 1.84,22.73 -0.50,20.80 1.84,18.87 1.55,15.85 4.57,16.14" fill="#f2e6a6"/><circle cx="6.5" cy="20.8" r="2.45" fill="#e6cf3a"/><ellipse cx="37.5" cy="13.45" rx="2.80" ry="5.25" fill="#8ea3a6" transform="rotate(-90 37.5 20.8)"/><polygon points="37.50,13.80 39.43,16.14 42.45,15.85 42.16,18.87 44.50,20.80 42.16,22.73 42.45,25.75 39.43,25.46 37.50,27.80 35.57,25.46 32.55,25.75 32.84,22.73 30.50,20.80 32.84,18.87 32.55,15.85 35.57,16.14" fill="#f2e6a6"/><circle cx="37.5" cy="20.8" r="2.45" fill="#e6cf3a"/><ellipse cx="23.9" cy="29.75" rx="2.80" ry="5.25" fill="#8ea3a6" transform="rotate(-60 23.9 37.1)"/><ellipse cx="23.9" cy="29.75" rx="2.80" ry="5.25" fill="#8ea3a6" transform="rotate(0 23.9 37.1)"/><ellipse cx="23.9" cy="29.75" rx="2.80" ry="5.25" fill="#8ea3a6" transform="rotate(70 23.9 37.1)"/><polygon points="23.90,30.10 25.83,32.44 28.85,32.15 28.56,35.17 30.90,37.10 28.56,39.03 28.85,42.05 25.83,41.76 23.90,44.10 21.97,41.76 18.95,42.05 19.24,39.03 16.90,37.10 19.24,35.17 18.95,32.15 21.97,32.44" fill="#f2e6a6"/><circle cx="23.9" cy="37.1" r="2.45" fill="#e6cf3a"/></g></svg><div class="r" style="left:566px;top:384px;width:147px;height:0.8px;background:#404040;"></div><svg class="r" style="left:574px;top:388px;" width="120" height="11" viewBox="0 0 120 11"><circle cx="5.6" cy="5.2" r="4.2" fill="none" stroke="#ccc" stroke-width="0.9"/><path d="M5.6,4.5 V7.6" stroke="#ccc" stroke-width="1"/><circle cx="5.6" cy="3" r="0.6" fill="#ccc"/><path d="M80,8.5 L85.5,3 L86.8,4.3 L81.3,9.8 L79.6,10Z" fill="#ccc"/><path d="M94,5.5 H99 M97,3.5 L99,5.5 L97,7.5 M100.5,1.5 H105 V9.5 H100.5" stroke="#ccc" stroke-width="0.9" fill="none"/><path d="M110.5,3 H117.5 M111.5,3 V10 H116.5 V3 M113,1.5 H115" stroke="#ccc" stroke-width="0.9" fill="none"/></svg><div class="r" style="left:362.8px;top:669.4px;width:239.1px;height:21.2px;background:#363636;border:1px solid #4e4e4e;box-sizing:border-box;border-radius:3px;box-shadow:0 1px 3px rgba(0,0,0,.5)"></div><div class="r" style="left:367px;top:673px;width:1.5px;height:14px;background:#8a8a8a;"></div><div class="r" style="left:375.3px;top:671.5px;width:73.5px;height:17px;background:#3e3e3e;border:1px solid #505050;box-sizing:border-box;border-radius:2px"></div><svg class="r" style="left:381px;top:675px;" width="10" height="10" viewBox="0 0 10 10"><path d="M1.5,8.5 L7,3 L8.5,4.5 L3,10 L1.2,10Z" fill="#ddd"/></svg><div class="t" style="left:396.6px;top:674.8px;font-size:7.8px;color:#f0f0f0;font-weight:normal;">Draw (Pencil)</div><div class="r" style="left:451.9px;top:671.5px;width:107.8px;height:17px;background:#3e3e3e;border:1px solid #505050;box-sizing:border-box;border-radius:2px"></div><svg class="r" style="left:456px;top:674px;" width="11" height="11" viewBox="0 0 11 11"><path d="M4,2.5 H1.5 V9.5 H9 V6.5" stroke="#ddd" stroke-width="0.9" fill="none"/><path d="M4,7 L8.5,2.5 M6,2.5 H8.5 V5" stroke="#ddd" stroke-width="0.9" fill="none"/><circle cx="2" cy="2" r="1.6" fill="#4a8ef0"/></svg><div class="t" style="left:470px;top:674.8px;font-size:7.83px;color:#f0f0f0;font-weight:normal;">Generate Vectors (Beta)</div><svg class="r" style="left:563px;top:674px;" width="12" height="11" viewBox="0 0 12 11"><rect x="1" y="2" width="8" height="7" fill="none" stroke="#ccc" stroke-width="0.9"/><path d="M3,7 L5,5 L7,7" stroke="#ccc" stroke-width="0.8" fill="none"/><circle cx="9" cy="8" r="2.2" fill="#363636" stroke="#ccc" stroke-width="0.8"/></svg><svg class="r" style="left:581px;top:677px;" width="14" height="6" viewBox="0 0 14 6"><circle cx="2.5" cy="3" r="1.1" fill="#ddd"/><circle cx="6.8" cy="3" r="1.1" fill="#ddd"/><circle cx="11.1" cy="3" r="1.1" fill="#ddd"/></svg><svg class="r" style="left:383px;top:361px;" width="26" height="35" viewBox="0 0 26 35"><path d="M3.2,3.2 L3.2,25.7 L8.5,20.5 L18.7,18.6Z" fill="#000" stroke="#fff" stroke-width="1.2" stroke-linejoin="round"/><rect x="14.5" y="24" width="7.8" height="7.8" fill="#000" stroke="#fff" stroke-width="1"/></svg><svg class="r" style="left:1040px;top:550px;overflow:hidden" width="154.5" height="170" viewBox="8 8 647 712" preserveAspectRatio="none"><defs><filter id="bl" x="-5%" y="-5%" width="110%" height="110%"><feGaussianBlur stdDeviation="5"/></filter><linearGradient id="wall" x1="0" y1="0" x2="0" y2="1"><stop offset="0" stop-color="#ded0b2"/><stop offset="0.6" stop-color="#d5c5a5"/><stop offset="1" stop-color="#cbb999"/></linearGradient><linearGradient id="sw" x1="0" y1="0" x2="1" y2="1"><stop offset="0" stop-color="#a01e2c"/><stop offset="0.5" stop-color="#8c1826"/><stop offset="1" stop-color="#7a1420"/></linearGradient><radialGradient id="face" cx="0.42" cy="0.38" r="0.65"><stop offset="0" stop-color="#dcb9a9"/><stop offset="0.7" stop-color="#cca595"/><stop offset="1" stop-color="#b08878"/></radialGradient></defs><g filter="url(#bl)"><rect x="-20" y="-20" width="710" height="760" fill="url(#wall)"/><rect x="600" y="90" width="80" height="640" fill="#e4d8be"/><path d="M612,150 L665,100 L665,720 L612,720Z" fill="#efe5cf"/><rect x="560" y="420" width="110" height="300" fill="#d4c4a4"/><path d="M-20,-20 L205,-20 L205,470 L-20,520Z" fill="#ddd4c6"/><path d="M-20,-20 L58,-20 L58,520 L-20,520Z" fill="#ebe5da"/><path d="M58,40 L200,120 L200,140 L58,65Z" fill="#c8beae"/><path d="M100,15 L205,60 L205,140 L110,110Z" fill="#4e4036"/><path d="M130,45 L200,80 L200,135 L135,112Z" fill="#2e2620"/><path d="M58,150 L130,180 L130,200 L58,185Z" fill="#b8ae9e"/><path d="M60,205 L128,232 L128,320 L60,312Z" fill="#dcd4c6"/><path d="M135,150 L195,175 L195,255 L135,235Z" fill="#d2c9b9"/><path d="M58,318 L130,328 L130,342 L58,338Z" fill="#b4aa98"/><path d="M42,345 L112,352 L112,460 L42,470Z" fill="#6a6056"/><rect x="515" y="195" width="65" height="90" fill="#2a2622"/><rect x="523" y="203" width="50" height="74" fill="#dad2c2"/><path d="M530,272 L550,238 L566,255 L570,272Z" fill="#2a2a2a"/><rect x="563" y="305" width="68" height="65" fill="#3a342e"/><rect x="571" y="313" width="53" height="50" fill="#cbc1ac"/><rect x="565" y="365" width="95" height="40" fill="#8a7a60"/><rect x="600" y="340" width="30" height="38" fill="#e6e2da"/><rect x="560" y="392" width="100" height="22" fill="#4e6a7c"/><path d="M75,450 C80,330 110,262 190,252 L470,258 C540,262 560,300 562,360 L592,500 L592,580 L75,580Z" fill="#353537"/><path d="M75,455 C80,340 100,272 170,256 L205,300 L205,455Z" fill="#727274"/><path d="M168,310 C158,205 190,108 275,82 C355,62 440,110 460,190 C470,240 462,292 440,325 L425,240 C405,175 325,152 255,162 C205,172 192,225 192,310Z" fill="#55524d"/><path d="M188,160 C230,88 335,66 410,112 C365,96 285,92 232,132Z" fill="#807b74"/><path d="M195,235 C198,165 262,145 320,148 C388,152 423,200 423,270 C423,345 412,400 380,448 C350,478 272,478 242,446 C208,400 195,330 195,235Z" fill="url(#face)"/><path d="M190,262 C174,258 172,300 182,328 C190,342 200,338 200,318Z" fill="#b88f7e"/><path d="M418,272 C438,268 438,302 424,330 L414,325Z" fill="#a88070"/><path d="M205,262 C205,248 288,252 300,264 C305,282 298,318 284,322 C260,326 220,318 213,304 C208,290 205,276 205,262Z" fill="#987470" stroke="#22181c" stroke-width="10"/><path d="M326,272 C331,260 416,266 424,282 C426,302 415,332 403,335 C380,339 338,333 331,317 C325,300 324,282 326,272Z" fill="#947270" stroke="#22181c" stroke-width="10"/><path d="M300,272 C310,264 318,266 327,274" stroke="#22181c" stroke-width="8" fill="none"/><ellipse cx="255" cy="292" rx="18" ry="8" fill="#6a5050"/><ellipse cx="372" cy="300" rx="18" ry="8" fill="#6a5050"/><path d="M302,330 C300,350 292,365 300,373 C315,379 335,376 345,366 C345,350 335,336 330,326Z" fill="#b48c7c"/><path d="M255,396 C270,372 300,374 315,382 C335,374 360,380 368,402 C340,397 320,394 310,397 C290,394 270,397 255,396Z" fill="#5a4a42"/><path d="M250,405 C265,445 300,478 322,478 C352,476 372,440 380,400 C360,420 330,425 310,425 C285,425 265,418 250,405Z" fill="#b09a8e"/><path d="M238,440 C262,490 358,490 382,440 L388,520 L232,520Z" fill="#ae8474"/><path d="M198,470 C240,522 360,522 398,470 L394,640 L300,700 L202,640Z" fill="#282426"/><path d="M-20,740 L-20,560 C20,500 60,470 130,440 L210,422 C210,482 230,542 300,602 L300,740Z" fill="url(#sw)"/><path d="M690,740 L690,560 C650,500 600,470 520,452 L400,422 C400,502 380,562 300,622 L300,740Z" fill="#861624"/><path d="M130,440 L210,422 C200,462 210,522 230,562 C200,542 160,502 130,440Z" fill="#a8222f"/><path d="M400,422 L470,452 C450,502 420,542 385,562 C395,522 400,472 400,422Z" fill="#a2202d"/><path d="M-20,600 C20,590 40,700 30,740 L-20,740Z" fill="#6e101c"/><path d="M500,560 C560,600 600,680 610,740 L560,740 C540,680 520,620 500,560Z" fill="#9c1c2a"/><path d="M285,640 L300,720" stroke="#5a0c16" stroke-width="6"/></g></svg>
</body></html>
